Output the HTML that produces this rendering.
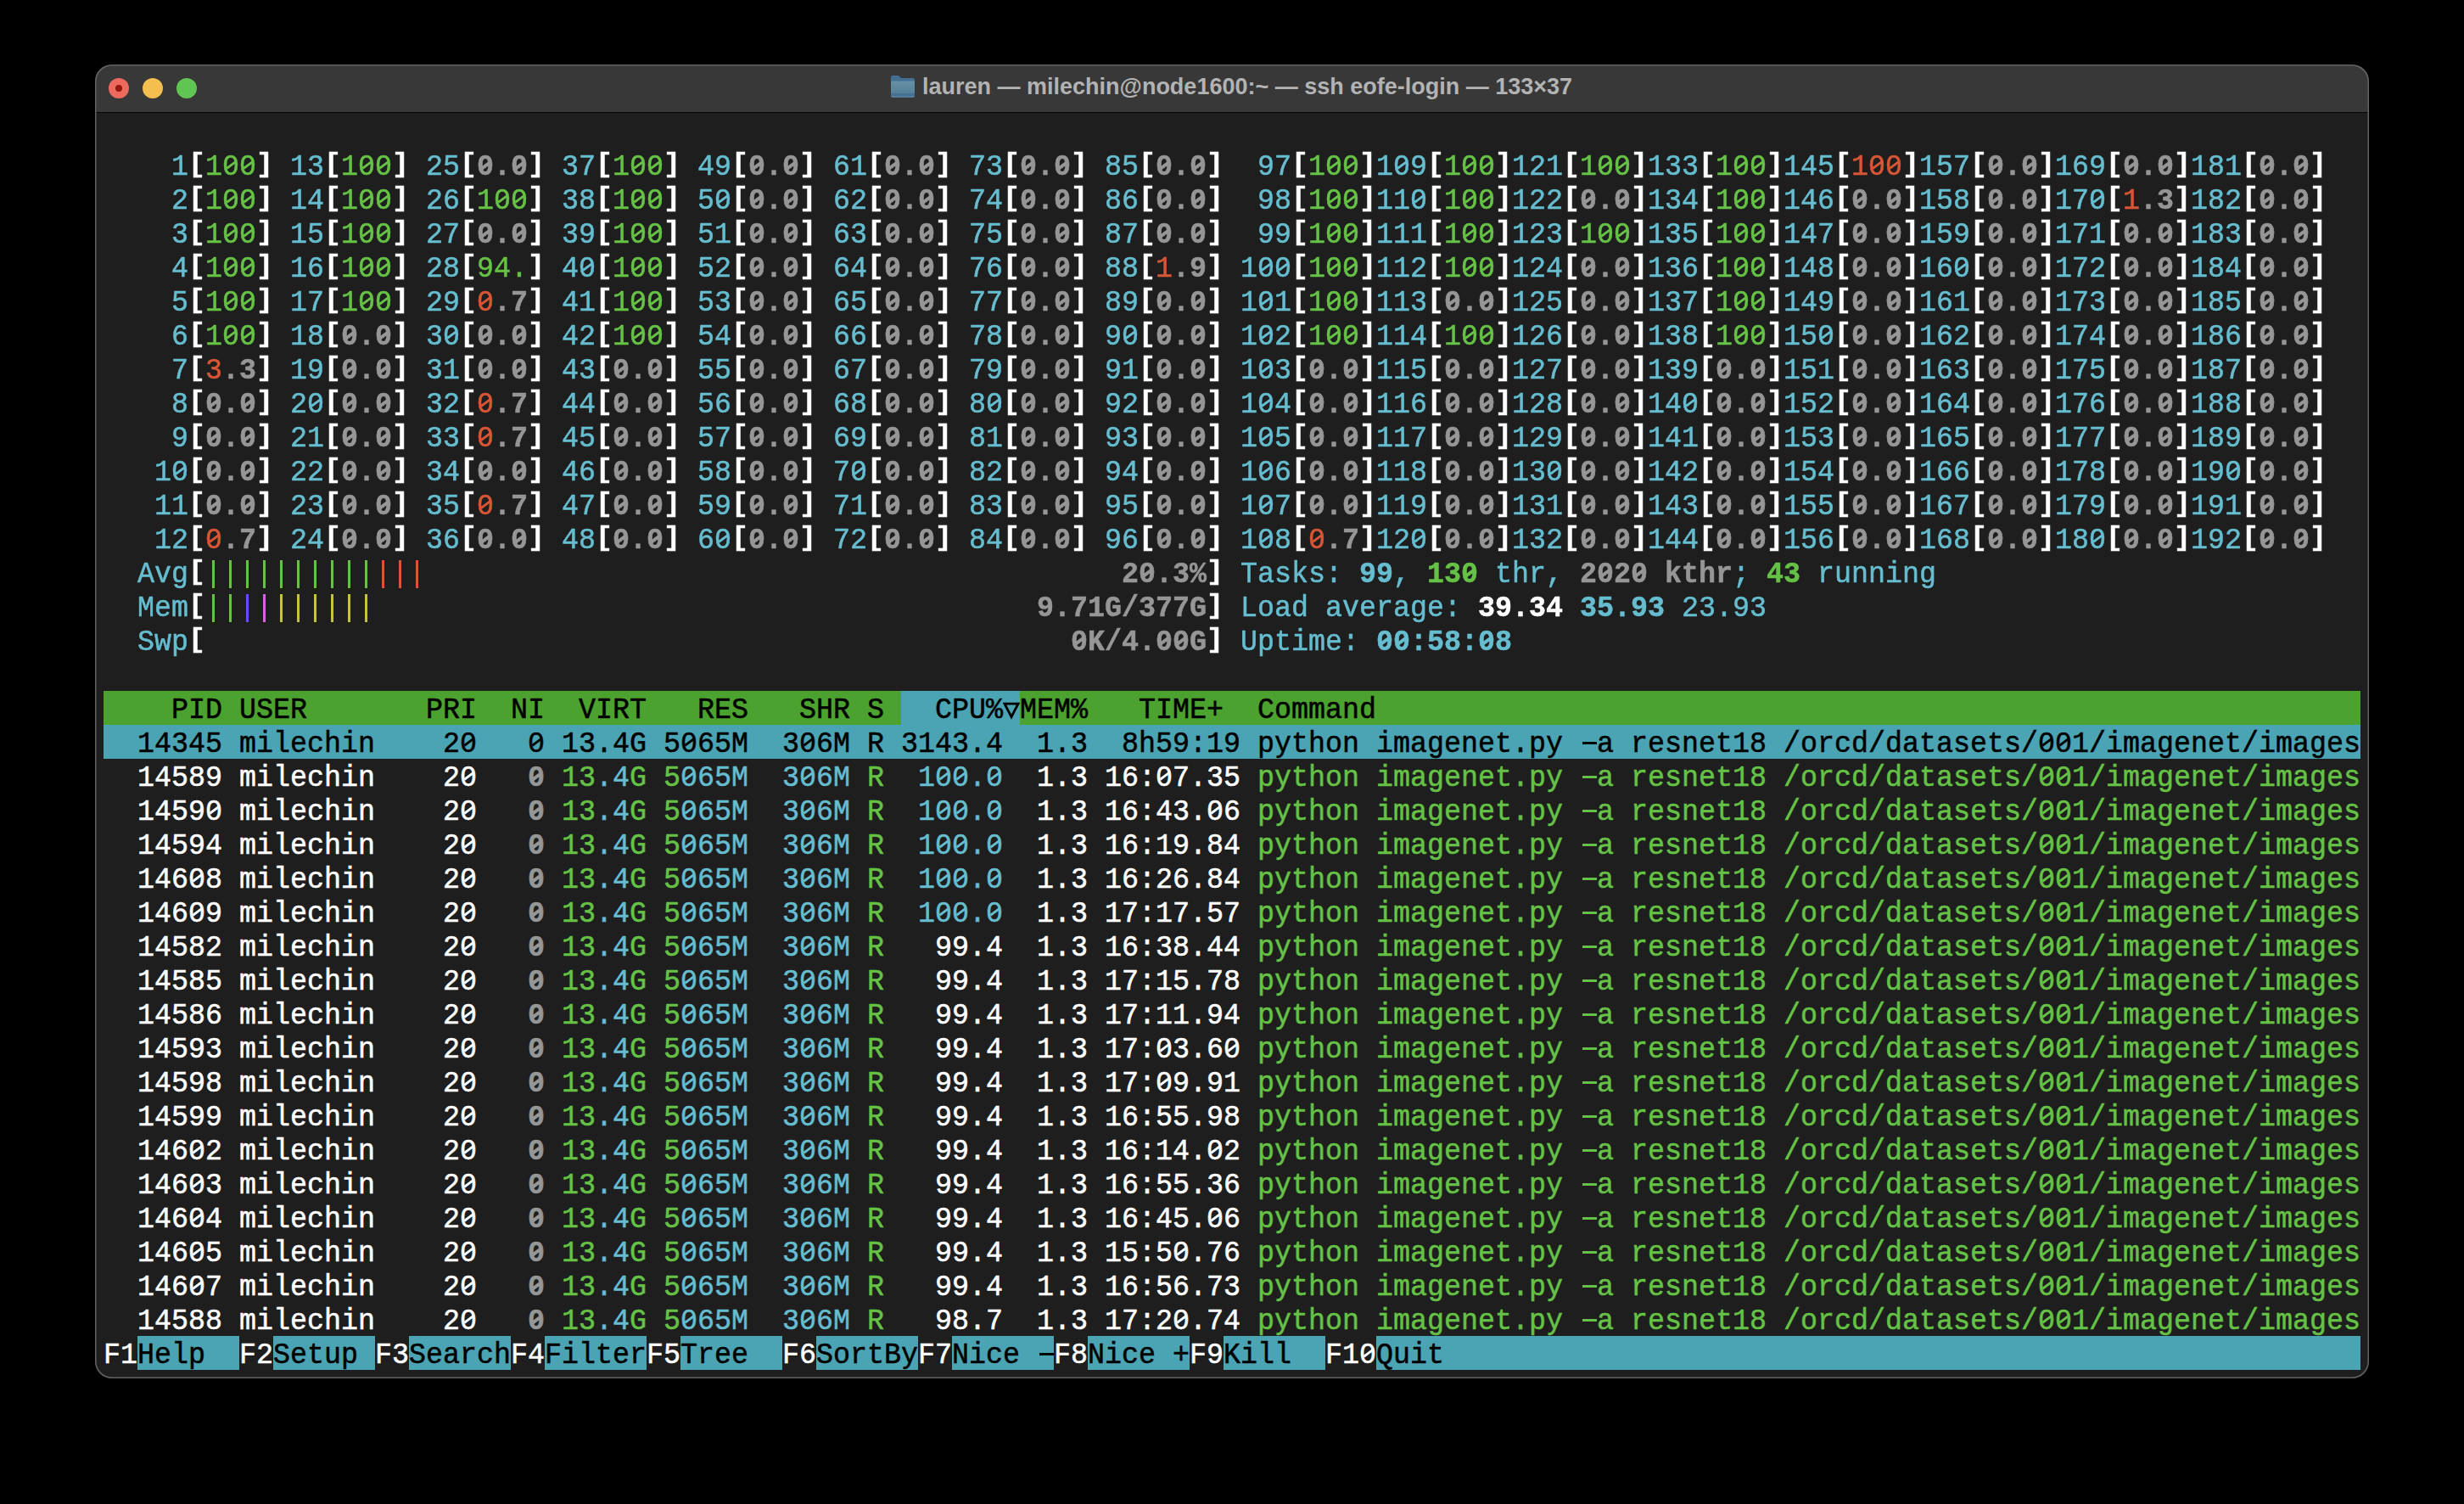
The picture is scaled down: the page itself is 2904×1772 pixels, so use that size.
<!DOCTYPE html><html><head><meta charset="utf-8"><style>
*{margin:0;padding:0;box-sizing:border-box}
html,body{width:2904px;height:1772px;background:#000;overflow:hidden}
.win{position:absolute;left:112px;top:76px;width:2680px;height:1548px;border-radius:20px;
 background:#1e1e1e;overflow:hidden;box-shadow:0 0 0 1.5px #5f5f5f inset}
.tb{position:absolute;left:0;top:0;width:100%;height:56px;background:#383838;border-bottom:1px solid #0d0d0d}
.light{position:absolute;top:16px;width:24px;height:24px;border-radius:50%}
.title{position:absolute;left:977px;top:10px;height:36px;line-height:36px;font:bold 27px "Liberation Sans",sans-serif;color:#b3b3b3;white-space:pre}
.r{position:absolute;left:122px;height:40px;line-height:40px;white-space:pre;font-family:"Liberation Mono",monospace;font-size:33.33px;transform:scaleY(1.06);transform-origin:0 29px;-webkit-text-stroke:0.5px currentColor}
.r span{position:absolute;top:0}
.r span.b{transform:translateY(-1.5px) scaleY(0.88);transform-origin:0 7px}
.bg{position:absolute;height:40px}
.bar{position:absolute;width:3px;height:33px}
.z{position:absolute;width:20px;height:40px}
.z::before{content:"";position:absolute;left:7px;top:16.5px;width:6px;height:7px;background:var(--b)}
.z::after{content:"";position:absolute;left:3.5px;top:19px;width:13px;height:3px;background:var(--c);transform:rotate(-37deg)}
.z.k::after{height:3.6px;top:18.7px}
</style></head><body><div style="position:absolute;left:112px;top:76px;width:2680px;height:1548px;border-radius:20px;background:#1e1e1e;"></div><div style="position:absolute;left:112px;top:76px;width:2680px;height:56px;background:#383838;border-radius:20px 20px 0 0"></div>
<div style="position:absolute;left:112px;top:132px;width:2680px;height:1px;background:#050505"></div>
<div style="position:absolute;left:128px;top:92px;width:24px;height:24px;border-radius:50%;background:#ec6a5e"></div>
<div style="position:absolute;left:168px;top:92px;width:24px;height:24px;border-radius:50%;background:#f4bf4f"></div>
<div style="position:absolute;left:208px;top:92px;width:24px;height:24px;border-radius:50%;background:#61c554"></div>
<div style="position:absolute;left:136px;top:100px;width:8px;height:8px;border-radius:50%;background:#8f1a0e"></div>
<svg style="position:absolute;left:1050px;top:89px" width="28" height="26" viewBox="0 0 28 26"><defs><linearGradient id="fg" x1="0" y1="0" x2="0" y2="1"><stop offset="0" stop-color="#6690a3"/><stop offset="1" stop-color="#4f7a98"/></linearGradient></defs><path d="M0 2Q0 0 2 0H9L12 3H26Q28 3 28 5V24Q28 26 26 26H2Q0 26 0 24Z" fill="#426f92"/><path d="M0 6.5H28V24Q28 26 26 26H2Q0 26 0 24Z" fill="url(#fg)"/><rect x="0" y="21" width="28" height="3" fill="#46708e"/></svg>
<div class="title" style="left:1087px;top:87px;position:absolute">lauren — milechin@node1600:~ — ssh eofe-login — 133×37</div>
<div class="bg" style="left:122px;top:814px;width:2660px;background:#4ba22e"></div>
<div class="bg" style="left:1062px;top:814px;width:140px;background:#4ba4b4"></div>
<div class="bg" style="left:122px;top:854px;width:2660px;background:#4ba4b4"></div>
<div class="bg" style="left:162px;top:1574px;width:120px;background:#4ba4b4"></div>
<div class="bg" style="left:322px;top:1574px;width:120px;background:#4ba4b4"></div>
<div class="bg" style="left:482px;top:1574px;width:120px;background:#4ba4b4"></div>
<div class="bg" style="left:642px;top:1574px;width:120px;background:#4ba4b4"></div>
<div class="bg" style="left:802px;top:1574px;width:120px;background:#4ba4b4"></div>
<div class="bg" style="left:962px;top:1574px;width:120px;background:#4ba4b4"></div>
<div class="bg" style="left:1122px;top:1574px;width:120px;background:#4ba4b4"></div>
<div class="bg" style="left:1282px;top:1574px;width:120px;background:#4ba4b4"></div>
<div class="bg" style="left:1442px;top:1574px;width:120px;background:#4ba4b4"></div>
<div class="bg" style="left:1622px;top:1574px;width:1160px;background:#4ba4b4"></div>
<div class="bar" style="left:250px;top:660px;background:#66c246"></div>
<div class="bar" style="left:270px;top:660px;background:#66c246"></div>
<div class="bar" style="left:290px;top:660px;background:#66c246"></div>
<div class="bar" style="left:310px;top:660px;background:#66c246"></div>
<div class="bar" style="left:330px;top:660px;background:#66c246"></div>
<div class="bar" style="left:350px;top:660px;background:#66c246"></div>
<div class="bar" style="left:370px;top:660px;background:#66c246"></div>
<div class="bar" style="left:390px;top:660px;background:#66c246"></div>
<div class="bar" style="left:410px;top:660px;background:#66c246"></div>
<div class="bar" style="left:430px;top:660px;background:#66c246"></div>
<div class="bar" style="left:450px;top:660px;background:#d75636"></div>
<div class="bar" style="left:470px;top:660px;background:#d75636"></div>
<div class="bar" style="left:490px;top:660px;background:#d75636"></div>
<div class="bar" style="left:250px;top:700px;background:#66c246"></div>
<div class="bar" style="left:270px;top:700px;background:#66c246"></div>
<div class="bar" style="left:290px;top:700px;background:#6a4cff"></div>
<div class="bar" style="left:310px;top:700px;background:#dd5fe6"></div>
<div class="bar" style="left:330px;top:700px;background:#c6c04a"></div>
<div class="bar" style="left:350px;top:700px;background:#c6c04a"></div>
<div class="bar" style="left:370px;top:700px;background:#c6c04a"></div>
<div class="bar" style="left:390px;top:700px;background:#c6c04a"></div>
<div class="bar" style="left:410px;top:700px;background:#c6c04a"></div>
<div class="bar" style="left:430px;top:700px;background:#c6c04a"></div>
<div style="position:absolute;left:1864.5px;top:874px;width:17.5px;height:3.2px;background:#000000"></div>
<div style="position:absolute;left:1864.5px;top:914px;width:17.5px;height:3.2px;background:#66c246"></div>
<div style="position:absolute;left:1864.5px;top:954px;width:17.5px;height:3.2px;background:#66c246"></div>
<div style="position:absolute;left:1864.5px;top:994px;width:17.5px;height:3.2px;background:#66c246"></div>
<div style="position:absolute;left:1864.5px;top:1034px;width:17.5px;height:3.2px;background:#66c246"></div>
<div style="position:absolute;left:1864.5px;top:1074px;width:17.5px;height:3.2px;background:#66c246"></div>
<div style="position:absolute;left:1864.5px;top:1114px;width:17.5px;height:3.2px;background:#66c246"></div>
<div style="position:absolute;left:1864.5px;top:1154px;width:17.5px;height:3.2px;background:#66c246"></div>
<div style="position:absolute;left:1864.5px;top:1194px;width:17.5px;height:3.2px;background:#66c246"></div>
<div style="position:absolute;left:1864.5px;top:1234px;width:17.5px;height:3.2px;background:#66c246"></div>
<div style="position:absolute;left:1864.5px;top:1274px;width:17.5px;height:3.2px;background:#66c246"></div>
<div style="position:absolute;left:1864.5px;top:1314px;width:17.5px;height:3.2px;background:#66c246"></div>
<div style="position:absolute;left:1864.5px;top:1354px;width:17.5px;height:3.2px;background:#66c246"></div>
<div style="position:absolute;left:1864.5px;top:1394px;width:17.5px;height:3.2px;background:#66c246"></div>
<div style="position:absolute;left:1864.5px;top:1434px;width:17.5px;height:3.2px;background:#66c246"></div>
<div style="position:absolute;left:1864.5px;top:1474px;width:17.5px;height:3.2px;background:#66c246"></div>
<div style="position:absolute;left:1864.5px;top:1514px;width:17.5px;height:3.2px;background:#66c246"></div>
<div style="position:absolute;left:1864.5px;top:1554px;width:17.5px;height:3.2px;background:#66c246"></div>
<div style="position:absolute;left:1224.5px;top:1594px;width:17.5px;height:3.2px;background:#000000"></div>
<div class="r" style="top:177px"><span style="left:40px;color:#66bdcf">  1</span><span class="b" style="left:100px;color:#ffffff;font-weight:bold">[</span><span style="left:120px;color:#66c246">100</span><span class="b" style="left:180px;color:#ffffff;font-weight:bold">]</span><span style="left:1340px;color:#66bdcf"> 97</span><span class="b" style="left:1400px;color:#ffffff;font-weight:bold">[</span><span style="left:1420px;color:#66c246">100</span><span class="b" style="left:1480px;color:#ffffff;font-weight:bold">]</span><span style="left:200px;color:#66bdcf"> 13</span><span class="b" style="left:260px;color:#ffffff;font-weight:bold">[</span><span style="left:280px;color:#66c246">100</span><span class="b" style="left:340px;color:#ffffff;font-weight:bold">]</span><span style="left:1500px;color:#66bdcf">109</span><span class="b" style="left:1560px;color:#ffffff;font-weight:bold">[</span><span style="left:1580px;color:#66c246">100</span><span class="b" style="left:1640px;color:#ffffff;font-weight:bold">]</span><span style="left:360px;color:#66bdcf"> 25</span><span class="b" style="left:420px;color:#ffffff;font-weight:bold">[</span><span style="left:440px;color:#969696;font-weight:bold">0.0</span><span class="b" style="left:500px;color:#ffffff;font-weight:bold">]</span><span style="left:1660px;color:#66bdcf">121</span><span class="b" style="left:1720px;color:#ffffff;font-weight:bold">[</span><span style="left:1740px;color:#66c246">100</span><span class="b" style="left:1800px;color:#ffffff;font-weight:bold">]</span><span style="left:520px;color:#66bdcf"> 37</span><span class="b" style="left:580px;color:#ffffff;font-weight:bold">[</span><span style="left:600px;color:#66c246">100</span><span class="b" style="left:660px;color:#ffffff;font-weight:bold">]</span><span style="left:1820px;color:#66bdcf">133</span><span class="b" style="left:1880px;color:#ffffff;font-weight:bold">[</span><span style="left:1900px;color:#66c246">100</span><span class="b" style="left:1960px;color:#ffffff;font-weight:bold">]</span><span style="left:680px;color:#66bdcf"> 49</span><span class="b" style="left:740px;color:#ffffff;font-weight:bold">[</span><span style="left:760px;color:#969696;font-weight:bold">0.0</span><span class="b" style="left:820px;color:#ffffff;font-weight:bold">]</span><span style="left:1980px;color:#66bdcf">145</span><span class="b" style="left:2040px;color:#ffffff;font-weight:bold">[</span><span style="left:2060px;color:#d75636">100</span><span class="b" style="left:2120px;color:#ffffff;font-weight:bold">]</span><span style="left:840px;color:#66bdcf"> 61</span><span class="b" style="left:900px;color:#ffffff;font-weight:bold">[</span><span style="left:920px;color:#969696;font-weight:bold">0.0</span><span class="b" style="left:980px;color:#ffffff;font-weight:bold">]</span><span style="left:2140px;color:#66bdcf">157</span><span class="b" style="left:2200px;color:#ffffff;font-weight:bold">[</span><span style="left:2220px;color:#969696;font-weight:bold">0.0</span><span class="b" style="left:2280px;color:#ffffff;font-weight:bold">]</span><span style="left:1000px;color:#66bdcf"> 73</span><span class="b" style="left:1060px;color:#ffffff;font-weight:bold">[</span><span style="left:1080px;color:#969696;font-weight:bold">0.0</span><span class="b" style="left:1140px;color:#ffffff;font-weight:bold">]</span><span style="left:2300px;color:#66bdcf">169</span><span class="b" style="left:2360px;color:#ffffff;font-weight:bold">[</span><span style="left:2380px;color:#969696;font-weight:bold">0.0</span><span class="b" style="left:2440px;color:#ffffff;font-weight:bold">]</span><span style="left:1160px;color:#66bdcf"> 85</span><span class="b" style="left:1220px;color:#ffffff;font-weight:bold">[</span><span style="left:1240px;color:#969696;font-weight:bold">0.0</span><span class="b" style="left:1300px;color:#ffffff;font-weight:bold">]</span><span style="left:2460px;color:#66bdcf">181</span><span class="b" style="left:2520px;color:#ffffff;font-weight:bold">[</span><span style="left:2540px;color:#969696;font-weight:bold">0.0</span><span class="b" style="left:2600px;color:#ffffff;font-weight:bold">]</span></div>
<div class="r" style="top:217px"><span style="left:40px;color:#66bdcf">  2</span><span class="b" style="left:100px;color:#ffffff;font-weight:bold">[</span><span style="left:120px;color:#66c246">100</span><span class="b" style="left:180px;color:#ffffff;font-weight:bold">]</span><span style="left:1340px;color:#66bdcf"> 98</span><span class="b" style="left:1400px;color:#ffffff;font-weight:bold">[</span><span style="left:1420px;color:#66c246">100</span><span class="b" style="left:1480px;color:#ffffff;font-weight:bold">]</span><span style="left:200px;color:#66bdcf"> 14</span><span class="b" style="left:260px;color:#ffffff;font-weight:bold">[</span><span style="left:280px;color:#66c246">100</span><span class="b" style="left:340px;color:#ffffff;font-weight:bold">]</span><span style="left:1500px;color:#66bdcf">110</span><span class="b" style="left:1560px;color:#ffffff;font-weight:bold">[</span><span style="left:1580px;color:#66c246">100</span><span class="b" style="left:1640px;color:#ffffff;font-weight:bold">]</span><span style="left:360px;color:#66bdcf"> 26</span><span class="b" style="left:420px;color:#ffffff;font-weight:bold">[</span><span style="left:440px;color:#66c246">100</span><span class="b" style="left:500px;color:#ffffff;font-weight:bold">]</span><span style="left:1660px;color:#66bdcf">122</span><span class="b" style="left:1720px;color:#ffffff;font-weight:bold">[</span><span style="left:1740px;color:#969696;font-weight:bold">0.0</span><span class="b" style="left:1800px;color:#ffffff;font-weight:bold">]</span><span style="left:520px;color:#66bdcf"> 38</span><span class="b" style="left:580px;color:#ffffff;font-weight:bold">[</span><span style="left:600px;color:#66c246">100</span><span class="b" style="left:660px;color:#ffffff;font-weight:bold">]</span><span style="left:1820px;color:#66bdcf">134</span><span class="b" style="left:1880px;color:#ffffff;font-weight:bold">[</span><span style="left:1900px;color:#66c246">100</span><span class="b" style="left:1960px;color:#ffffff;font-weight:bold">]</span><span style="left:680px;color:#66bdcf"> 50</span><span class="b" style="left:740px;color:#ffffff;font-weight:bold">[</span><span style="left:760px;color:#969696;font-weight:bold">0.0</span><span class="b" style="left:820px;color:#ffffff;font-weight:bold">]</span><span style="left:1980px;color:#66bdcf">146</span><span class="b" style="left:2040px;color:#ffffff;font-weight:bold">[</span><span style="left:2060px;color:#969696;font-weight:bold">0.0</span><span class="b" style="left:2120px;color:#ffffff;font-weight:bold">]</span><span style="left:840px;color:#66bdcf"> 62</span><span class="b" style="left:900px;color:#ffffff;font-weight:bold">[</span><span style="left:920px;color:#969696;font-weight:bold">0.0</span><span class="b" style="left:980px;color:#ffffff;font-weight:bold">]</span><span style="left:2140px;color:#66bdcf">158</span><span class="b" style="left:2200px;color:#ffffff;font-weight:bold">[</span><span style="left:2220px;color:#969696;font-weight:bold">0.0</span><span class="b" style="left:2280px;color:#ffffff;font-weight:bold">]</span><span style="left:1000px;color:#66bdcf"> 74</span><span class="b" style="left:1060px;color:#ffffff;font-weight:bold">[</span><span style="left:1080px;color:#969696;font-weight:bold">0.0</span><span class="b" style="left:1140px;color:#ffffff;font-weight:bold">]</span><span style="left:2300px;color:#66bdcf">170</span><span class="b" style="left:2360px;color:#ffffff;font-weight:bold">[</span><span style="left:2380px;color:#d75636">1</span><span style="left:2400px;color:#969696;font-weight:bold">.3</span><span class="b" style="left:2440px;color:#ffffff;font-weight:bold">]</span><span style="left:1160px;color:#66bdcf"> 86</span><span class="b" style="left:1220px;color:#ffffff;font-weight:bold">[</span><span style="left:1240px;color:#969696;font-weight:bold">0.0</span><span class="b" style="left:1300px;color:#ffffff;font-weight:bold">]</span><span style="left:2460px;color:#66bdcf">182</span><span class="b" style="left:2520px;color:#ffffff;font-weight:bold">[</span><span style="left:2540px;color:#969696;font-weight:bold">0.0</span><span class="b" style="left:2600px;color:#ffffff;font-weight:bold">]</span></div>
<div class="r" style="top:257px"><span style="left:40px;color:#66bdcf">  3</span><span class="b" style="left:100px;color:#ffffff;font-weight:bold">[</span><span style="left:120px;color:#66c246">100</span><span class="b" style="left:180px;color:#ffffff;font-weight:bold">]</span><span style="left:1340px;color:#66bdcf"> 99</span><span class="b" style="left:1400px;color:#ffffff;font-weight:bold">[</span><span style="left:1420px;color:#66c246">100</span><span class="b" style="left:1480px;color:#ffffff;font-weight:bold">]</span><span style="left:200px;color:#66bdcf"> 15</span><span class="b" style="left:260px;color:#ffffff;font-weight:bold">[</span><span style="left:280px;color:#66c246">100</span><span class="b" style="left:340px;color:#ffffff;font-weight:bold">]</span><span style="left:1500px;color:#66bdcf">111</span><span class="b" style="left:1560px;color:#ffffff;font-weight:bold">[</span><span style="left:1580px;color:#66c246">100</span><span class="b" style="left:1640px;color:#ffffff;font-weight:bold">]</span><span style="left:360px;color:#66bdcf"> 27</span><span class="b" style="left:420px;color:#ffffff;font-weight:bold">[</span><span style="left:440px;color:#969696;font-weight:bold">0.0</span><span class="b" style="left:500px;color:#ffffff;font-weight:bold">]</span><span style="left:1660px;color:#66bdcf">123</span><span class="b" style="left:1720px;color:#ffffff;font-weight:bold">[</span><span style="left:1740px;color:#66c246">100</span><span class="b" style="left:1800px;color:#ffffff;font-weight:bold">]</span><span style="left:520px;color:#66bdcf"> 39</span><span class="b" style="left:580px;color:#ffffff;font-weight:bold">[</span><span style="left:600px;color:#66c246">100</span><span class="b" style="left:660px;color:#ffffff;font-weight:bold">]</span><span style="left:1820px;color:#66bdcf">135</span><span class="b" style="left:1880px;color:#ffffff;font-weight:bold">[</span><span style="left:1900px;color:#66c246">100</span><span class="b" style="left:1960px;color:#ffffff;font-weight:bold">]</span><span style="left:680px;color:#66bdcf"> 51</span><span class="b" style="left:740px;color:#ffffff;font-weight:bold">[</span><span style="left:760px;color:#969696;font-weight:bold">0.0</span><span class="b" style="left:820px;color:#ffffff;font-weight:bold">]</span><span style="left:1980px;color:#66bdcf">147</span><span class="b" style="left:2040px;color:#ffffff;font-weight:bold">[</span><span style="left:2060px;color:#969696;font-weight:bold">0.0</span><span class="b" style="left:2120px;color:#ffffff;font-weight:bold">]</span><span style="left:840px;color:#66bdcf"> 63</span><span class="b" style="left:900px;color:#ffffff;font-weight:bold">[</span><span style="left:920px;color:#969696;font-weight:bold">0.0</span><span class="b" style="left:980px;color:#ffffff;font-weight:bold">]</span><span style="left:2140px;color:#66bdcf">159</span><span class="b" style="left:2200px;color:#ffffff;font-weight:bold">[</span><span style="left:2220px;color:#969696;font-weight:bold">0.0</span><span class="b" style="left:2280px;color:#ffffff;font-weight:bold">]</span><span style="left:1000px;color:#66bdcf"> 75</span><span class="b" style="left:1060px;color:#ffffff;font-weight:bold">[</span><span style="left:1080px;color:#969696;font-weight:bold">0.0</span><span class="b" style="left:1140px;color:#ffffff;font-weight:bold">]</span><span style="left:2300px;color:#66bdcf">171</span><span class="b" style="left:2360px;color:#ffffff;font-weight:bold">[</span><span style="left:2380px;color:#969696;font-weight:bold">0.0</span><span class="b" style="left:2440px;color:#ffffff;font-weight:bold">]</span><span style="left:1160px;color:#66bdcf"> 87</span><span class="b" style="left:1220px;color:#ffffff;font-weight:bold">[</span><span style="left:1240px;color:#969696;font-weight:bold">0.0</span><span class="b" style="left:1300px;color:#ffffff;font-weight:bold">]</span><span style="left:2460px;color:#66bdcf">183</span><span class="b" style="left:2520px;color:#ffffff;font-weight:bold">[</span><span style="left:2540px;color:#969696;font-weight:bold">0.0</span><span class="b" style="left:2600px;color:#ffffff;font-weight:bold">]</span></div>
<div class="r" style="top:297px"><span style="left:40px;color:#66bdcf">  4</span><span class="b" style="left:100px;color:#ffffff;font-weight:bold">[</span><span style="left:120px;color:#66c246">100</span><span class="b" style="left:180px;color:#ffffff;font-weight:bold">]</span><span style="left:1340px;color:#66bdcf">100</span><span class="b" style="left:1400px;color:#ffffff;font-weight:bold">[</span><span style="left:1420px;color:#66c246">100</span><span class="b" style="left:1480px;color:#ffffff;font-weight:bold">]</span><span style="left:200px;color:#66bdcf"> 16</span><span class="b" style="left:260px;color:#ffffff;font-weight:bold">[</span><span style="left:280px;color:#66c246">100</span><span class="b" style="left:340px;color:#ffffff;font-weight:bold">]</span><span style="left:1500px;color:#66bdcf">112</span><span class="b" style="left:1560px;color:#ffffff;font-weight:bold">[</span><span style="left:1580px;color:#66c246">100</span><span class="b" style="left:1640px;color:#ffffff;font-weight:bold">]</span><span style="left:360px;color:#66bdcf"> 28</span><span class="b" style="left:420px;color:#ffffff;font-weight:bold">[</span><span style="left:440px;color:#66c246">94.</span><span class="b" style="left:500px;color:#ffffff;font-weight:bold">]</span><span style="left:1660px;color:#66bdcf">124</span><span class="b" style="left:1720px;color:#ffffff;font-weight:bold">[</span><span style="left:1740px;color:#969696;font-weight:bold">0.0</span><span class="b" style="left:1800px;color:#ffffff;font-weight:bold">]</span><span style="left:520px;color:#66bdcf"> 40</span><span class="b" style="left:580px;color:#ffffff;font-weight:bold">[</span><span style="left:600px;color:#66c246">100</span><span class="b" style="left:660px;color:#ffffff;font-weight:bold">]</span><span style="left:1820px;color:#66bdcf">136</span><span class="b" style="left:1880px;color:#ffffff;font-weight:bold">[</span><span style="left:1900px;color:#66c246">100</span><span class="b" style="left:1960px;color:#ffffff;font-weight:bold">]</span><span style="left:680px;color:#66bdcf"> 52</span><span class="b" style="left:740px;color:#ffffff;font-weight:bold">[</span><span style="left:760px;color:#969696;font-weight:bold">0.0</span><span class="b" style="left:820px;color:#ffffff;font-weight:bold">]</span><span style="left:1980px;color:#66bdcf">148</span><span class="b" style="left:2040px;color:#ffffff;font-weight:bold">[</span><span style="left:2060px;color:#969696;font-weight:bold">0.0</span><span class="b" style="left:2120px;color:#ffffff;font-weight:bold">]</span><span style="left:840px;color:#66bdcf"> 64</span><span class="b" style="left:900px;color:#ffffff;font-weight:bold">[</span><span style="left:920px;color:#969696;font-weight:bold">0.0</span><span class="b" style="left:980px;color:#ffffff;font-weight:bold">]</span><span style="left:2140px;color:#66bdcf">160</span><span class="b" style="left:2200px;color:#ffffff;font-weight:bold">[</span><span style="left:2220px;color:#969696;font-weight:bold">0.0</span><span class="b" style="left:2280px;color:#ffffff;font-weight:bold">]</span><span style="left:1000px;color:#66bdcf"> 76</span><span class="b" style="left:1060px;color:#ffffff;font-weight:bold">[</span><span style="left:1080px;color:#969696;font-weight:bold">0.0</span><span class="b" style="left:1140px;color:#ffffff;font-weight:bold">]</span><span style="left:2300px;color:#66bdcf">172</span><span class="b" style="left:2360px;color:#ffffff;font-weight:bold">[</span><span style="left:2380px;color:#969696;font-weight:bold">0.0</span><span class="b" style="left:2440px;color:#ffffff;font-weight:bold">]</span><span style="left:1160px;color:#66bdcf"> 88</span><span class="b" style="left:1220px;color:#ffffff;font-weight:bold">[</span><span style="left:1240px;color:#d75636">1</span><span style="left:1260px;color:#969696;font-weight:bold">.9</span><span class="b" style="left:1300px;color:#ffffff;font-weight:bold">]</span><span style="left:2460px;color:#66bdcf">184</span><span class="b" style="left:2520px;color:#ffffff;font-weight:bold">[</span><span style="left:2540px;color:#969696;font-weight:bold">0.0</span><span class="b" style="left:2600px;color:#ffffff;font-weight:bold">]</span></div>
<div class="r" style="top:337px"><span style="left:40px;color:#66bdcf">  5</span><span class="b" style="left:100px;color:#ffffff;font-weight:bold">[</span><span style="left:120px;color:#66c246">100</span><span class="b" style="left:180px;color:#ffffff;font-weight:bold">]</span><span style="left:1340px;color:#66bdcf">101</span><span class="b" style="left:1400px;color:#ffffff;font-weight:bold">[</span><span style="left:1420px;color:#66c246">100</span><span class="b" style="left:1480px;color:#ffffff;font-weight:bold">]</span><span style="left:200px;color:#66bdcf"> 17</span><span class="b" style="left:260px;color:#ffffff;font-weight:bold">[</span><span style="left:280px;color:#66c246">100</span><span class="b" style="left:340px;color:#ffffff;font-weight:bold">]</span><span style="left:1500px;color:#66bdcf">113</span><span class="b" style="left:1560px;color:#ffffff;font-weight:bold">[</span><span style="left:1580px;color:#969696;font-weight:bold">0.0</span><span class="b" style="left:1640px;color:#ffffff;font-weight:bold">]</span><span style="left:360px;color:#66bdcf"> 29</span><span class="b" style="left:420px;color:#ffffff;font-weight:bold">[</span><span style="left:440px;color:#d75636">0</span><span style="left:460px;color:#969696;font-weight:bold">.7</span><span class="b" style="left:500px;color:#ffffff;font-weight:bold">]</span><span style="left:1660px;color:#66bdcf">125</span><span class="b" style="left:1720px;color:#ffffff;font-weight:bold">[</span><span style="left:1740px;color:#969696;font-weight:bold">0.0</span><span class="b" style="left:1800px;color:#ffffff;font-weight:bold">]</span><span style="left:520px;color:#66bdcf"> 41</span><span class="b" style="left:580px;color:#ffffff;font-weight:bold">[</span><span style="left:600px;color:#66c246">100</span><span class="b" style="left:660px;color:#ffffff;font-weight:bold">]</span><span style="left:1820px;color:#66bdcf">137</span><span class="b" style="left:1880px;color:#ffffff;font-weight:bold">[</span><span style="left:1900px;color:#66c246">100</span><span class="b" style="left:1960px;color:#ffffff;font-weight:bold">]</span><span style="left:680px;color:#66bdcf"> 53</span><span class="b" style="left:740px;color:#ffffff;font-weight:bold">[</span><span style="left:760px;color:#969696;font-weight:bold">0.0</span><span class="b" style="left:820px;color:#ffffff;font-weight:bold">]</span><span style="left:1980px;color:#66bdcf">149</span><span class="b" style="left:2040px;color:#ffffff;font-weight:bold">[</span><span style="left:2060px;color:#969696;font-weight:bold">0.0</span><span class="b" style="left:2120px;color:#ffffff;font-weight:bold">]</span><span style="left:840px;color:#66bdcf"> 65</span><span class="b" style="left:900px;color:#ffffff;font-weight:bold">[</span><span style="left:920px;color:#969696;font-weight:bold">0.0</span><span class="b" style="left:980px;color:#ffffff;font-weight:bold">]</span><span style="left:2140px;color:#66bdcf">161</span><span class="b" style="left:2200px;color:#ffffff;font-weight:bold">[</span><span style="left:2220px;color:#969696;font-weight:bold">0.0</span><span class="b" style="left:2280px;color:#ffffff;font-weight:bold">]</span><span style="left:1000px;color:#66bdcf"> 77</span><span class="b" style="left:1060px;color:#ffffff;font-weight:bold">[</span><span style="left:1080px;color:#969696;font-weight:bold">0.0</span><span class="b" style="left:1140px;color:#ffffff;font-weight:bold">]</span><span style="left:2300px;color:#66bdcf">173</span><span class="b" style="left:2360px;color:#ffffff;font-weight:bold">[</span><span style="left:2380px;color:#969696;font-weight:bold">0.0</span><span class="b" style="left:2440px;color:#ffffff;font-weight:bold">]</span><span style="left:1160px;color:#66bdcf"> 89</span><span class="b" style="left:1220px;color:#ffffff;font-weight:bold">[</span><span style="left:1240px;color:#969696;font-weight:bold">0.0</span><span class="b" style="left:1300px;color:#ffffff;font-weight:bold">]</span><span style="left:2460px;color:#66bdcf">185</span><span class="b" style="left:2520px;color:#ffffff;font-weight:bold">[</span><span style="left:2540px;color:#969696;font-weight:bold">0.0</span><span class="b" style="left:2600px;color:#ffffff;font-weight:bold">]</span></div>
<div class="r" style="top:377px"><span style="left:40px;color:#66bdcf">  6</span><span class="b" style="left:100px;color:#ffffff;font-weight:bold">[</span><span style="left:120px;color:#66c246">100</span><span class="b" style="left:180px;color:#ffffff;font-weight:bold">]</span><span style="left:1340px;color:#66bdcf">102</span><span class="b" style="left:1400px;color:#ffffff;font-weight:bold">[</span><span style="left:1420px;color:#66c246">100</span><span class="b" style="left:1480px;color:#ffffff;font-weight:bold">]</span><span style="left:200px;color:#66bdcf"> 18</span><span class="b" style="left:260px;color:#ffffff;font-weight:bold">[</span><span style="left:280px;color:#969696;font-weight:bold">0.0</span><span class="b" style="left:340px;color:#ffffff;font-weight:bold">]</span><span style="left:1500px;color:#66bdcf">114</span><span class="b" style="left:1560px;color:#ffffff;font-weight:bold">[</span><span style="left:1580px;color:#66c246">100</span><span class="b" style="left:1640px;color:#ffffff;font-weight:bold">]</span><span style="left:360px;color:#66bdcf"> 30</span><span class="b" style="left:420px;color:#ffffff;font-weight:bold">[</span><span style="left:440px;color:#969696;font-weight:bold">0.0</span><span class="b" style="left:500px;color:#ffffff;font-weight:bold">]</span><span style="left:1660px;color:#66bdcf">126</span><span class="b" style="left:1720px;color:#ffffff;font-weight:bold">[</span><span style="left:1740px;color:#969696;font-weight:bold">0.0</span><span class="b" style="left:1800px;color:#ffffff;font-weight:bold">]</span><span style="left:520px;color:#66bdcf"> 42</span><span class="b" style="left:580px;color:#ffffff;font-weight:bold">[</span><span style="left:600px;color:#66c246">100</span><span class="b" style="left:660px;color:#ffffff;font-weight:bold">]</span><span style="left:1820px;color:#66bdcf">138</span><span class="b" style="left:1880px;color:#ffffff;font-weight:bold">[</span><span style="left:1900px;color:#66c246">100</span><span class="b" style="left:1960px;color:#ffffff;font-weight:bold">]</span><span style="left:680px;color:#66bdcf"> 54</span><span class="b" style="left:740px;color:#ffffff;font-weight:bold">[</span><span style="left:760px;color:#969696;font-weight:bold">0.0</span><span class="b" style="left:820px;color:#ffffff;font-weight:bold">]</span><span style="left:1980px;color:#66bdcf">150</span><span class="b" style="left:2040px;color:#ffffff;font-weight:bold">[</span><span style="left:2060px;color:#969696;font-weight:bold">0.0</span><span class="b" style="left:2120px;color:#ffffff;font-weight:bold">]</span><span style="left:840px;color:#66bdcf"> 66</span><span class="b" style="left:900px;color:#ffffff;font-weight:bold">[</span><span style="left:920px;color:#969696;font-weight:bold">0.0</span><span class="b" style="left:980px;color:#ffffff;font-weight:bold">]</span><span style="left:2140px;color:#66bdcf">162</span><span class="b" style="left:2200px;color:#ffffff;font-weight:bold">[</span><span style="left:2220px;color:#969696;font-weight:bold">0.0</span><span class="b" style="left:2280px;color:#ffffff;font-weight:bold">]</span><span style="left:1000px;color:#66bdcf"> 78</span><span class="b" style="left:1060px;color:#ffffff;font-weight:bold">[</span><span style="left:1080px;color:#969696;font-weight:bold">0.0</span><span class="b" style="left:1140px;color:#ffffff;font-weight:bold">]</span><span style="left:2300px;color:#66bdcf">174</span><span class="b" style="left:2360px;color:#ffffff;font-weight:bold">[</span><span style="left:2380px;color:#969696;font-weight:bold">0.0</span><span class="b" style="left:2440px;color:#ffffff;font-weight:bold">]</span><span style="left:1160px;color:#66bdcf"> 90</span><span class="b" style="left:1220px;color:#ffffff;font-weight:bold">[</span><span style="left:1240px;color:#969696;font-weight:bold">0.0</span><span class="b" style="left:1300px;color:#ffffff;font-weight:bold">]</span><span style="left:2460px;color:#66bdcf">186</span><span class="b" style="left:2520px;color:#ffffff;font-weight:bold">[</span><span style="left:2540px;color:#969696;font-weight:bold">0.0</span><span class="b" style="left:2600px;color:#ffffff;font-weight:bold">]</span></div>
<div class="r" style="top:417px"><span style="left:40px;color:#66bdcf">  7</span><span class="b" style="left:100px;color:#ffffff;font-weight:bold">[</span><span style="left:120px;color:#d75636">3</span><span style="left:140px;color:#969696;font-weight:bold">.3</span><span class="b" style="left:180px;color:#ffffff;font-weight:bold">]</span><span style="left:1340px;color:#66bdcf">103</span><span class="b" style="left:1400px;color:#ffffff;font-weight:bold">[</span><span style="left:1420px;color:#969696;font-weight:bold">0.0</span><span class="b" style="left:1480px;color:#ffffff;font-weight:bold">]</span><span style="left:200px;color:#66bdcf"> 19</span><span class="b" style="left:260px;color:#ffffff;font-weight:bold">[</span><span style="left:280px;color:#969696;font-weight:bold">0.0</span><span class="b" style="left:340px;color:#ffffff;font-weight:bold">]</span><span style="left:1500px;color:#66bdcf">115</span><span class="b" style="left:1560px;color:#ffffff;font-weight:bold">[</span><span style="left:1580px;color:#969696;font-weight:bold">0.0</span><span class="b" style="left:1640px;color:#ffffff;font-weight:bold">]</span><span style="left:360px;color:#66bdcf"> 31</span><span class="b" style="left:420px;color:#ffffff;font-weight:bold">[</span><span style="left:440px;color:#969696;font-weight:bold">0.0</span><span class="b" style="left:500px;color:#ffffff;font-weight:bold">]</span><span style="left:1660px;color:#66bdcf">127</span><span class="b" style="left:1720px;color:#ffffff;font-weight:bold">[</span><span style="left:1740px;color:#969696;font-weight:bold">0.0</span><span class="b" style="left:1800px;color:#ffffff;font-weight:bold">]</span><span style="left:520px;color:#66bdcf"> 43</span><span class="b" style="left:580px;color:#ffffff;font-weight:bold">[</span><span style="left:600px;color:#969696;font-weight:bold">0.0</span><span class="b" style="left:660px;color:#ffffff;font-weight:bold">]</span><span style="left:1820px;color:#66bdcf">139</span><span class="b" style="left:1880px;color:#ffffff;font-weight:bold">[</span><span style="left:1900px;color:#969696;font-weight:bold">0.0</span><span class="b" style="left:1960px;color:#ffffff;font-weight:bold">]</span><span style="left:680px;color:#66bdcf"> 55</span><span class="b" style="left:740px;color:#ffffff;font-weight:bold">[</span><span style="left:760px;color:#969696;font-weight:bold">0.0</span><span class="b" style="left:820px;color:#ffffff;font-weight:bold">]</span><span style="left:1980px;color:#66bdcf">151</span><span class="b" style="left:2040px;color:#ffffff;font-weight:bold">[</span><span style="left:2060px;color:#969696;font-weight:bold">0.0</span><span class="b" style="left:2120px;color:#ffffff;font-weight:bold">]</span><span style="left:840px;color:#66bdcf"> 67</span><span class="b" style="left:900px;color:#ffffff;font-weight:bold">[</span><span style="left:920px;color:#969696;font-weight:bold">0.0</span><span class="b" style="left:980px;color:#ffffff;font-weight:bold">]</span><span style="left:2140px;color:#66bdcf">163</span><span class="b" style="left:2200px;color:#ffffff;font-weight:bold">[</span><span style="left:2220px;color:#969696;font-weight:bold">0.0</span><span class="b" style="left:2280px;color:#ffffff;font-weight:bold">]</span><span style="left:1000px;color:#66bdcf"> 79</span><span class="b" style="left:1060px;color:#ffffff;font-weight:bold">[</span><span style="left:1080px;color:#969696;font-weight:bold">0.0</span><span class="b" style="left:1140px;color:#ffffff;font-weight:bold">]</span><span style="left:2300px;color:#66bdcf">175</span><span class="b" style="left:2360px;color:#ffffff;font-weight:bold">[</span><span style="left:2380px;color:#969696;font-weight:bold">0.0</span><span class="b" style="left:2440px;color:#ffffff;font-weight:bold">]</span><span style="left:1160px;color:#66bdcf"> 91</span><span class="b" style="left:1220px;color:#ffffff;font-weight:bold">[</span><span style="left:1240px;color:#969696;font-weight:bold">0.0</span><span class="b" style="left:1300px;color:#ffffff;font-weight:bold">]</span><span style="left:2460px;color:#66bdcf">187</span><span class="b" style="left:2520px;color:#ffffff;font-weight:bold">[</span><span style="left:2540px;color:#969696;font-weight:bold">0.0</span><span class="b" style="left:2600px;color:#ffffff;font-weight:bold">]</span></div>
<div class="r" style="top:457px"><span style="left:40px;color:#66bdcf">  8</span><span class="b" style="left:100px;color:#ffffff;font-weight:bold">[</span><span style="left:120px;color:#969696;font-weight:bold">0.0</span><span class="b" style="left:180px;color:#ffffff;font-weight:bold">]</span><span style="left:1340px;color:#66bdcf">104</span><span class="b" style="left:1400px;color:#ffffff;font-weight:bold">[</span><span style="left:1420px;color:#969696;font-weight:bold">0.0</span><span class="b" style="left:1480px;color:#ffffff;font-weight:bold">]</span><span style="left:200px;color:#66bdcf"> 20</span><span class="b" style="left:260px;color:#ffffff;font-weight:bold">[</span><span style="left:280px;color:#969696;font-weight:bold">0.0</span><span class="b" style="left:340px;color:#ffffff;font-weight:bold">]</span><span style="left:1500px;color:#66bdcf">116</span><span class="b" style="left:1560px;color:#ffffff;font-weight:bold">[</span><span style="left:1580px;color:#969696;font-weight:bold">0.0</span><span class="b" style="left:1640px;color:#ffffff;font-weight:bold">]</span><span style="left:360px;color:#66bdcf"> 32</span><span class="b" style="left:420px;color:#ffffff;font-weight:bold">[</span><span style="left:440px;color:#d75636">0</span><span style="left:460px;color:#969696;font-weight:bold">.7</span><span class="b" style="left:500px;color:#ffffff;font-weight:bold">]</span><span style="left:1660px;color:#66bdcf">128</span><span class="b" style="left:1720px;color:#ffffff;font-weight:bold">[</span><span style="left:1740px;color:#969696;font-weight:bold">0.0</span><span class="b" style="left:1800px;color:#ffffff;font-weight:bold">]</span><span style="left:520px;color:#66bdcf"> 44</span><span class="b" style="left:580px;color:#ffffff;font-weight:bold">[</span><span style="left:600px;color:#969696;font-weight:bold">0.0</span><span class="b" style="left:660px;color:#ffffff;font-weight:bold">]</span><span style="left:1820px;color:#66bdcf">140</span><span class="b" style="left:1880px;color:#ffffff;font-weight:bold">[</span><span style="left:1900px;color:#969696;font-weight:bold">0.0</span><span class="b" style="left:1960px;color:#ffffff;font-weight:bold">]</span><span style="left:680px;color:#66bdcf"> 56</span><span class="b" style="left:740px;color:#ffffff;font-weight:bold">[</span><span style="left:760px;color:#969696;font-weight:bold">0.0</span><span class="b" style="left:820px;color:#ffffff;font-weight:bold">]</span><span style="left:1980px;color:#66bdcf">152</span><span class="b" style="left:2040px;color:#ffffff;font-weight:bold">[</span><span style="left:2060px;color:#969696;font-weight:bold">0.0</span><span class="b" style="left:2120px;color:#ffffff;font-weight:bold">]</span><span style="left:840px;color:#66bdcf"> 68</span><span class="b" style="left:900px;color:#ffffff;font-weight:bold">[</span><span style="left:920px;color:#969696;font-weight:bold">0.0</span><span class="b" style="left:980px;color:#ffffff;font-weight:bold">]</span><span style="left:2140px;color:#66bdcf">164</span><span class="b" style="left:2200px;color:#ffffff;font-weight:bold">[</span><span style="left:2220px;color:#969696;font-weight:bold">0.0</span><span class="b" style="left:2280px;color:#ffffff;font-weight:bold">]</span><span style="left:1000px;color:#66bdcf"> 80</span><span class="b" style="left:1060px;color:#ffffff;font-weight:bold">[</span><span style="left:1080px;color:#969696;font-weight:bold">0.0</span><span class="b" style="left:1140px;color:#ffffff;font-weight:bold">]</span><span style="left:2300px;color:#66bdcf">176</span><span class="b" style="left:2360px;color:#ffffff;font-weight:bold">[</span><span style="left:2380px;color:#969696;font-weight:bold">0.0</span><span class="b" style="left:2440px;color:#ffffff;font-weight:bold">]</span><span style="left:1160px;color:#66bdcf"> 92</span><span class="b" style="left:1220px;color:#ffffff;font-weight:bold">[</span><span style="left:1240px;color:#969696;font-weight:bold">0.0</span><span class="b" style="left:1300px;color:#ffffff;font-weight:bold">]</span><span style="left:2460px;color:#66bdcf">188</span><span class="b" style="left:2520px;color:#ffffff;font-weight:bold">[</span><span style="left:2540px;color:#969696;font-weight:bold">0.0</span><span class="b" style="left:2600px;color:#ffffff;font-weight:bold">]</span></div>
<div class="r" style="top:497px"><span style="left:40px;color:#66bdcf">  9</span><span class="b" style="left:100px;color:#ffffff;font-weight:bold">[</span><span style="left:120px;color:#969696;font-weight:bold">0.0</span><span class="b" style="left:180px;color:#ffffff;font-weight:bold">]</span><span style="left:1340px;color:#66bdcf">105</span><span class="b" style="left:1400px;color:#ffffff;font-weight:bold">[</span><span style="left:1420px;color:#969696;font-weight:bold">0.0</span><span class="b" style="left:1480px;color:#ffffff;font-weight:bold">]</span><span style="left:200px;color:#66bdcf"> 21</span><span class="b" style="left:260px;color:#ffffff;font-weight:bold">[</span><span style="left:280px;color:#969696;font-weight:bold">0.0</span><span class="b" style="left:340px;color:#ffffff;font-weight:bold">]</span><span style="left:1500px;color:#66bdcf">117</span><span class="b" style="left:1560px;color:#ffffff;font-weight:bold">[</span><span style="left:1580px;color:#969696;font-weight:bold">0.0</span><span class="b" style="left:1640px;color:#ffffff;font-weight:bold">]</span><span style="left:360px;color:#66bdcf"> 33</span><span class="b" style="left:420px;color:#ffffff;font-weight:bold">[</span><span style="left:440px;color:#d75636">0</span><span style="left:460px;color:#969696;font-weight:bold">.7</span><span class="b" style="left:500px;color:#ffffff;font-weight:bold">]</span><span style="left:1660px;color:#66bdcf">129</span><span class="b" style="left:1720px;color:#ffffff;font-weight:bold">[</span><span style="left:1740px;color:#969696;font-weight:bold">0.0</span><span class="b" style="left:1800px;color:#ffffff;font-weight:bold">]</span><span style="left:520px;color:#66bdcf"> 45</span><span class="b" style="left:580px;color:#ffffff;font-weight:bold">[</span><span style="left:600px;color:#969696;font-weight:bold">0.0</span><span class="b" style="left:660px;color:#ffffff;font-weight:bold">]</span><span style="left:1820px;color:#66bdcf">141</span><span class="b" style="left:1880px;color:#ffffff;font-weight:bold">[</span><span style="left:1900px;color:#969696;font-weight:bold">0.0</span><span class="b" style="left:1960px;color:#ffffff;font-weight:bold">]</span><span style="left:680px;color:#66bdcf"> 57</span><span class="b" style="left:740px;color:#ffffff;font-weight:bold">[</span><span style="left:760px;color:#969696;font-weight:bold">0.0</span><span class="b" style="left:820px;color:#ffffff;font-weight:bold">]</span><span style="left:1980px;color:#66bdcf">153</span><span class="b" style="left:2040px;color:#ffffff;font-weight:bold">[</span><span style="left:2060px;color:#969696;font-weight:bold">0.0</span><span class="b" style="left:2120px;color:#ffffff;font-weight:bold">]</span><span style="left:840px;color:#66bdcf"> 69</span><span class="b" style="left:900px;color:#ffffff;font-weight:bold">[</span><span style="left:920px;color:#969696;font-weight:bold">0.0</span><span class="b" style="left:980px;color:#ffffff;font-weight:bold">]</span><span style="left:2140px;color:#66bdcf">165</span><span class="b" style="left:2200px;color:#ffffff;font-weight:bold">[</span><span style="left:2220px;color:#969696;font-weight:bold">0.0</span><span class="b" style="left:2280px;color:#ffffff;font-weight:bold">]</span><span style="left:1000px;color:#66bdcf"> 81</span><span class="b" style="left:1060px;color:#ffffff;font-weight:bold">[</span><span style="left:1080px;color:#969696;font-weight:bold">0.0</span><span class="b" style="left:1140px;color:#ffffff;font-weight:bold">]</span><span style="left:2300px;color:#66bdcf">177</span><span class="b" style="left:2360px;color:#ffffff;font-weight:bold">[</span><span style="left:2380px;color:#969696;font-weight:bold">0.0</span><span class="b" style="left:2440px;color:#ffffff;font-weight:bold">]</span><span style="left:1160px;color:#66bdcf"> 93</span><span class="b" style="left:1220px;color:#ffffff;font-weight:bold">[</span><span style="left:1240px;color:#969696;font-weight:bold">0.0</span><span class="b" style="left:1300px;color:#ffffff;font-weight:bold">]</span><span style="left:2460px;color:#66bdcf">189</span><span class="b" style="left:2520px;color:#ffffff;font-weight:bold">[</span><span style="left:2540px;color:#969696;font-weight:bold">0.0</span><span class="b" style="left:2600px;color:#ffffff;font-weight:bold">]</span></div>
<div class="r" style="top:537px"><span style="left:40px;color:#66bdcf"> 10</span><span class="b" style="left:100px;color:#ffffff;font-weight:bold">[</span><span style="left:120px;color:#969696;font-weight:bold">0.0</span><span class="b" style="left:180px;color:#ffffff;font-weight:bold">]</span><span style="left:1340px;color:#66bdcf">106</span><span class="b" style="left:1400px;color:#ffffff;font-weight:bold">[</span><span style="left:1420px;color:#969696;font-weight:bold">0.0</span><span class="b" style="left:1480px;color:#ffffff;font-weight:bold">]</span><span style="left:200px;color:#66bdcf"> 22</span><span class="b" style="left:260px;color:#ffffff;font-weight:bold">[</span><span style="left:280px;color:#969696;font-weight:bold">0.0</span><span class="b" style="left:340px;color:#ffffff;font-weight:bold">]</span><span style="left:1500px;color:#66bdcf">118</span><span class="b" style="left:1560px;color:#ffffff;font-weight:bold">[</span><span style="left:1580px;color:#969696;font-weight:bold">0.0</span><span class="b" style="left:1640px;color:#ffffff;font-weight:bold">]</span><span style="left:360px;color:#66bdcf"> 34</span><span class="b" style="left:420px;color:#ffffff;font-weight:bold">[</span><span style="left:440px;color:#969696;font-weight:bold">0.0</span><span class="b" style="left:500px;color:#ffffff;font-weight:bold">]</span><span style="left:1660px;color:#66bdcf">130</span><span class="b" style="left:1720px;color:#ffffff;font-weight:bold">[</span><span style="left:1740px;color:#969696;font-weight:bold">0.0</span><span class="b" style="left:1800px;color:#ffffff;font-weight:bold">]</span><span style="left:520px;color:#66bdcf"> 46</span><span class="b" style="left:580px;color:#ffffff;font-weight:bold">[</span><span style="left:600px;color:#969696;font-weight:bold">0.0</span><span class="b" style="left:660px;color:#ffffff;font-weight:bold">]</span><span style="left:1820px;color:#66bdcf">142</span><span class="b" style="left:1880px;color:#ffffff;font-weight:bold">[</span><span style="left:1900px;color:#969696;font-weight:bold">0.0</span><span class="b" style="left:1960px;color:#ffffff;font-weight:bold">]</span><span style="left:680px;color:#66bdcf"> 58</span><span class="b" style="left:740px;color:#ffffff;font-weight:bold">[</span><span style="left:760px;color:#969696;font-weight:bold">0.0</span><span class="b" style="left:820px;color:#ffffff;font-weight:bold">]</span><span style="left:1980px;color:#66bdcf">154</span><span class="b" style="left:2040px;color:#ffffff;font-weight:bold">[</span><span style="left:2060px;color:#969696;font-weight:bold">0.0</span><span class="b" style="left:2120px;color:#ffffff;font-weight:bold">]</span><span style="left:840px;color:#66bdcf"> 70</span><span class="b" style="left:900px;color:#ffffff;font-weight:bold">[</span><span style="left:920px;color:#969696;font-weight:bold">0.0</span><span class="b" style="left:980px;color:#ffffff;font-weight:bold">]</span><span style="left:2140px;color:#66bdcf">166</span><span class="b" style="left:2200px;color:#ffffff;font-weight:bold">[</span><span style="left:2220px;color:#969696;font-weight:bold">0.0</span><span class="b" style="left:2280px;color:#ffffff;font-weight:bold">]</span><span style="left:1000px;color:#66bdcf"> 82</span><span class="b" style="left:1060px;color:#ffffff;font-weight:bold">[</span><span style="left:1080px;color:#969696;font-weight:bold">0.0</span><span class="b" style="left:1140px;color:#ffffff;font-weight:bold">]</span><span style="left:2300px;color:#66bdcf">178</span><span class="b" style="left:2360px;color:#ffffff;font-weight:bold">[</span><span style="left:2380px;color:#969696;font-weight:bold">0.0</span><span class="b" style="left:2440px;color:#ffffff;font-weight:bold">]</span><span style="left:1160px;color:#66bdcf"> 94</span><span class="b" style="left:1220px;color:#ffffff;font-weight:bold">[</span><span style="left:1240px;color:#969696;font-weight:bold">0.0</span><span class="b" style="left:1300px;color:#ffffff;font-weight:bold">]</span><span style="left:2460px;color:#66bdcf">190</span><span class="b" style="left:2520px;color:#ffffff;font-weight:bold">[</span><span style="left:2540px;color:#969696;font-weight:bold">0.0</span><span class="b" style="left:2600px;color:#ffffff;font-weight:bold">]</span></div>
<div class="r" style="top:577px"><span style="left:40px;color:#66bdcf"> 11</span><span class="b" style="left:100px;color:#ffffff;font-weight:bold">[</span><span style="left:120px;color:#969696;font-weight:bold">0.0</span><span class="b" style="left:180px;color:#ffffff;font-weight:bold">]</span><span style="left:1340px;color:#66bdcf">107</span><span class="b" style="left:1400px;color:#ffffff;font-weight:bold">[</span><span style="left:1420px;color:#969696;font-weight:bold">0.0</span><span class="b" style="left:1480px;color:#ffffff;font-weight:bold">]</span><span style="left:200px;color:#66bdcf"> 23</span><span class="b" style="left:260px;color:#ffffff;font-weight:bold">[</span><span style="left:280px;color:#969696;font-weight:bold">0.0</span><span class="b" style="left:340px;color:#ffffff;font-weight:bold">]</span><span style="left:1500px;color:#66bdcf">119</span><span class="b" style="left:1560px;color:#ffffff;font-weight:bold">[</span><span style="left:1580px;color:#969696;font-weight:bold">0.0</span><span class="b" style="left:1640px;color:#ffffff;font-weight:bold">]</span><span style="left:360px;color:#66bdcf"> 35</span><span class="b" style="left:420px;color:#ffffff;font-weight:bold">[</span><span style="left:440px;color:#d75636">0</span><span style="left:460px;color:#969696;font-weight:bold">.7</span><span class="b" style="left:500px;color:#ffffff;font-weight:bold">]</span><span style="left:1660px;color:#66bdcf">131</span><span class="b" style="left:1720px;color:#ffffff;font-weight:bold">[</span><span style="left:1740px;color:#969696;font-weight:bold">0.0</span><span class="b" style="left:1800px;color:#ffffff;font-weight:bold">]</span><span style="left:520px;color:#66bdcf"> 47</span><span class="b" style="left:580px;color:#ffffff;font-weight:bold">[</span><span style="left:600px;color:#969696;font-weight:bold">0.0</span><span class="b" style="left:660px;color:#ffffff;font-weight:bold">]</span><span style="left:1820px;color:#66bdcf">143</span><span class="b" style="left:1880px;color:#ffffff;font-weight:bold">[</span><span style="left:1900px;color:#969696;font-weight:bold">0.0</span><span class="b" style="left:1960px;color:#ffffff;font-weight:bold">]</span><span style="left:680px;color:#66bdcf"> 59</span><span class="b" style="left:740px;color:#ffffff;font-weight:bold">[</span><span style="left:760px;color:#969696;font-weight:bold">0.0</span><span class="b" style="left:820px;color:#ffffff;font-weight:bold">]</span><span style="left:1980px;color:#66bdcf">155</span><span class="b" style="left:2040px;color:#ffffff;font-weight:bold">[</span><span style="left:2060px;color:#969696;font-weight:bold">0.0</span><span class="b" style="left:2120px;color:#ffffff;font-weight:bold">]</span><span style="left:840px;color:#66bdcf"> 71</span><span class="b" style="left:900px;color:#ffffff;font-weight:bold">[</span><span style="left:920px;color:#969696;font-weight:bold">0.0</span><span class="b" style="left:980px;color:#ffffff;font-weight:bold">]</span><span style="left:2140px;color:#66bdcf">167</span><span class="b" style="left:2200px;color:#ffffff;font-weight:bold">[</span><span style="left:2220px;color:#969696;font-weight:bold">0.0</span><span class="b" style="left:2280px;color:#ffffff;font-weight:bold">]</span><span style="left:1000px;color:#66bdcf"> 83</span><span class="b" style="left:1060px;color:#ffffff;font-weight:bold">[</span><span style="left:1080px;color:#969696;font-weight:bold">0.0</span><span class="b" style="left:1140px;color:#ffffff;font-weight:bold">]</span><span style="left:2300px;color:#66bdcf">179</span><span class="b" style="left:2360px;color:#ffffff;font-weight:bold">[</span><span style="left:2380px;color:#969696;font-weight:bold">0.0</span><span class="b" style="left:2440px;color:#ffffff;font-weight:bold">]</span><span style="left:1160px;color:#66bdcf"> 95</span><span class="b" style="left:1220px;color:#ffffff;font-weight:bold">[</span><span style="left:1240px;color:#969696;font-weight:bold">0.0</span><span class="b" style="left:1300px;color:#ffffff;font-weight:bold">]</span><span style="left:2460px;color:#66bdcf">191</span><span class="b" style="left:2520px;color:#ffffff;font-weight:bold">[</span><span style="left:2540px;color:#969696;font-weight:bold">0.0</span><span class="b" style="left:2600px;color:#ffffff;font-weight:bold">]</span></div>
<div class="r" style="top:617px"><span style="left:40px;color:#66bdcf"> 12</span><span class="b" style="left:100px;color:#ffffff;font-weight:bold">[</span><span style="left:120px;color:#d75636">0</span><span style="left:140px;color:#969696;font-weight:bold">.7</span><span class="b" style="left:180px;color:#ffffff;font-weight:bold">]</span><span style="left:1340px;color:#66bdcf">108</span><span class="b" style="left:1400px;color:#ffffff;font-weight:bold">[</span><span style="left:1420px;color:#d75636">0</span><span style="left:1440px;color:#969696;font-weight:bold">.7</span><span class="b" style="left:1480px;color:#ffffff;font-weight:bold">]</span><span style="left:200px;color:#66bdcf"> 24</span><span class="b" style="left:260px;color:#ffffff;font-weight:bold">[</span><span style="left:280px;color:#969696;font-weight:bold">0.0</span><span class="b" style="left:340px;color:#ffffff;font-weight:bold">]</span><span style="left:1500px;color:#66bdcf">120</span><span class="b" style="left:1560px;color:#ffffff;font-weight:bold">[</span><span style="left:1580px;color:#969696;font-weight:bold">0.0</span><span class="b" style="left:1640px;color:#ffffff;font-weight:bold">]</span><span style="left:360px;color:#66bdcf"> 36</span><span class="b" style="left:420px;color:#ffffff;font-weight:bold">[</span><span style="left:440px;color:#969696;font-weight:bold">0.0</span><span class="b" style="left:500px;color:#ffffff;font-weight:bold">]</span><span style="left:1660px;color:#66bdcf">132</span><span class="b" style="left:1720px;color:#ffffff;font-weight:bold">[</span><span style="left:1740px;color:#969696;font-weight:bold">0.0</span><span class="b" style="left:1800px;color:#ffffff;font-weight:bold">]</span><span style="left:520px;color:#66bdcf"> 48</span><span class="b" style="left:580px;color:#ffffff;font-weight:bold">[</span><span style="left:600px;color:#969696;font-weight:bold">0.0</span><span class="b" style="left:660px;color:#ffffff;font-weight:bold">]</span><span style="left:1820px;color:#66bdcf">144</span><span class="b" style="left:1880px;color:#ffffff;font-weight:bold">[</span><span style="left:1900px;color:#969696;font-weight:bold">0.0</span><span class="b" style="left:1960px;color:#ffffff;font-weight:bold">]</span><span style="left:680px;color:#66bdcf"> 60</span><span class="b" style="left:740px;color:#ffffff;font-weight:bold">[</span><span style="left:760px;color:#969696;font-weight:bold">0.0</span><span class="b" style="left:820px;color:#ffffff;font-weight:bold">]</span><span style="left:1980px;color:#66bdcf">156</span><span class="b" style="left:2040px;color:#ffffff;font-weight:bold">[</span><span style="left:2060px;color:#969696;font-weight:bold">0.0</span><span class="b" style="left:2120px;color:#ffffff;font-weight:bold">]</span><span style="left:840px;color:#66bdcf"> 72</span><span class="b" style="left:900px;color:#ffffff;font-weight:bold">[</span><span style="left:920px;color:#969696;font-weight:bold">0.0</span><span class="b" style="left:980px;color:#ffffff;font-weight:bold">]</span><span style="left:2140px;color:#66bdcf">168</span><span class="b" style="left:2200px;color:#ffffff;font-weight:bold">[</span><span style="left:2220px;color:#969696;font-weight:bold">0.0</span><span class="b" style="left:2280px;color:#ffffff;font-weight:bold">]</span><span style="left:1000px;color:#66bdcf"> 84</span><span class="b" style="left:1060px;color:#ffffff;font-weight:bold">[</span><span style="left:1080px;color:#969696;font-weight:bold">0.0</span><span class="b" style="left:1140px;color:#ffffff;font-weight:bold">]</span><span style="left:2300px;color:#66bdcf">180</span><span class="b" style="left:2360px;color:#ffffff;font-weight:bold">[</span><span style="left:2380px;color:#969696;font-weight:bold">0.0</span><span class="b" style="left:2440px;color:#ffffff;font-weight:bold">]</span><span style="left:1160px;color:#66bdcf"> 96</span><span class="b" style="left:1220px;color:#ffffff;font-weight:bold">[</span><span style="left:1240px;color:#969696;font-weight:bold">0.0</span><span class="b" style="left:1300px;color:#ffffff;font-weight:bold">]</span><span style="left:2460px;color:#66bdcf">192</span><span class="b" style="left:2520px;color:#ffffff;font-weight:bold">[</span><span style="left:2540px;color:#969696;font-weight:bold">0.0</span><span class="b" style="left:2600px;color:#ffffff;font-weight:bold">]</span></div>
<div class="r" style="top:657px"><span style="left:40px;color:#66bdcf">Avg</span><span class="b" style="left:100px;color:#ffffff;font-weight:bold">[</span><span style="left:1200px;color:#969696;font-weight:bold">20.3%</span><span class="b" style="left:1300px;color:#ffffff;font-weight:bold">]</span><span style="left:1340px;color:#66bdcf">Tasks: </span><span style="left:1480px;color:#66bdcf;font-weight:bold">99</span><span style="left:1520px;color:#66bdcf">, </span><span style="left:1560px;color:#66c246;font-weight:bold">130</span><span style="left:1620px;color:#66bdcf"> thr, </span><span style="left:1740px;color:#969696;font-weight:bold">2020</span><span style="left:1820px;color:#969696;font-weight:bold"> kthr</span><span style="left:1920px;color:#66bdcf">; </span><span style="left:1960px;color:#66c246;font-weight:bold">43</span><span style="left:2000px;color:#66bdcf"> running</span></div>
<div class="r" style="top:697px"><span style="left:40px;color:#66bdcf">Mem</span><span class="b" style="left:100px;color:#ffffff;font-weight:bold">[</span><span style="left:1100px;color:#969696;font-weight:bold">9.71G/377G</span><span class="b" style="left:1300px;color:#ffffff;font-weight:bold">]</span><span style="left:1340px;color:#66bdcf">Load average: </span><span style="left:1620px;color:#ffffff;font-weight:bold">39.34 </span><span style="left:1740px;color:#66bdcf;font-weight:bold">35.93 </span><span style="left:1860px;color:#66bdcf">23.93</span></div>
<div class="r" style="top:737px"><span style="left:40px;color:#66bdcf">Swp</span><span class="b" style="left:100px;color:#ffffff;font-weight:bold">[</span><span style="left:1140px;color:#969696;font-weight:bold">0K/4.00G</span><span class="b" style="left:1300px;color:#ffffff;font-weight:bold">]</span><span style="left:1340px;color:#66bdcf">Uptime: </span><span style="left:1500px;color:#66bdcf;font-weight:bold">00:58:08</span></div>
<div class="r" style="top:817px"><span style="left:80px;color:#000000">PID</span><span style="left:160px;color:#000000">USER</span><span style="left:380px;color:#000000">PRI</span><span style="left:480px;color:#000000">NI</span><span style="left:560px;color:#000000">VIRT</span><span style="left:700px;color:#000000">RES</span><span style="left:820px;color:#000000">SHR</span><span style="left:900px;color:#000000">S</span><span style="left:980px;color:#000000">CPU%</span><span style="left:1080px;color:#000000">MEM%</span><span style="left:1220px;color:#000000">TIME+</span><span style="left:1360px;color:#000000">Command</span></div>
<div class="r" style="top:857px"><span style="left:0px;color:#000000">  14345 milechin    20   0 13.4G 5065M  306M R 3143.4  1.3  8h59:19 python imagenet.py  a resnet18 /orcd/datasets/001/imagenet/images</span></div>
<div class="r" style="top:897px"><span style="left:0px;color:#ffffff">  14589 milechin    20</span><span style="left:500px;color:#969696;font-weight:bold">0</span><span style="left:540px;color:#66c246">13</span><span style="left:580px;color:#66bdcf">.4</span><span style="left:620px;color:#66c246">G</span><span style="left:660px;color:#66c246">5</span><span style="left:680px;color:#66bdcf">065M</span><span style="left:800px;color:#66bdcf">306M</span><span style="left:900px;color:#66c246">R</span><span style="left:940px;color:#66bdcf"> 100.0</span><span style="left:1100px;color:#ffffff">1.3</span><span style="left:1180px;color:#ffffff">16:07.35</span><span style="left:1360px;color:#66c246">python imagenet.py  a resnet18 /orcd/datasets/001/imagenet/images</span></div>
<div class="r" style="top:937px"><span style="left:0px;color:#ffffff">  14590 milechin    20</span><span style="left:500px;color:#969696;font-weight:bold">0</span><span style="left:540px;color:#66c246">13</span><span style="left:580px;color:#66bdcf">.4</span><span style="left:620px;color:#66c246">G</span><span style="left:660px;color:#66c246">5</span><span style="left:680px;color:#66bdcf">065M</span><span style="left:800px;color:#66bdcf">306M</span><span style="left:900px;color:#66c246">R</span><span style="left:940px;color:#66bdcf"> 100.0</span><span style="left:1100px;color:#ffffff">1.3</span><span style="left:1180px;color:#ffffff">16:43.06</span><span style="left:1360px;color:#66c246">python imagenet.py  a resnet18 /orcd/datasets/001/imagenet/images</span></div>
<div class="r" style="top:977px"><span style="left:0px;color:#ffffff">  14594 milechin    20</span><span style="left:500px;color:#969696;font-weight:bold">0</span><span style="left:540px;color:#66c246">13</span><span style="left:580px;color:#66bdcf">.4</span><span style="left:620px;color:#66c246">G</span><span style="left:660px;color:#66c246">5</span><span style="left:680px;color:#66bdcf">065M</span><span style="left:800px;color:#66bdcf">306M</span><span style="left:900px;color:#66c246">R</span><span style="left:940px;color:#66bdcf"> 100.0</span><span style="left:1100px;color:#ffffff">1.3</span><span style="left:1180px;color:#ffffff">16:19.84</span><span style="left:1360px;color:#66c246">python imagenet.py  a resnet18 /orcd/datasets/001/imagenet/images</span></div>
<div class="r" style="top:1017px"><span style="left:0px;color:#ffffff">  14608 milechin    20</span><span style="left:500px;color:#969696;font-weight:bold">0</span><span style="left:540px;color:#66c246">13</span><span style="left:580px;color:#66bdcf">.4</span><span style="left:620px;color:#66c246">G</span><span style="left:660px;color:#66c246">5</span><span style="left:680px;color:#66bdcf">065M</span><span style="left:800px;color:#66bdcf">306M</span><span style="left:900px;color:#66c246">R</span><span style="left:940px;color:#66bdcf"> 100.0</span><span style="left:1100px;color:#ffffff">1.3</span><span style="left:1180px;color:#ffffff">16:26.84</span><span style="left:1360px;color:#66c246">python imagenet.py  a resnet18 /orcd/datasets/001/imagenet/images</span></div>
<div class="r" style="top:1057px"><span style="left:0px;color:#ffffff">  14609 milechin    20</span><span style="left:500px;color:#969696;font-weight:bold">0</span><span style="left:540px;color:#66c246">13</span><span style="left:580px;color:#66bdcf">.4</span><span style="left:620px;color:#66c246">G</span><span style="left:660px;color:#66c246">5</span><span style="left:680px;color:#66bdcf">065M</span><span style="left:800px;color:#66bdcf">306M</span><span style="left:900px;color:#66c246">R</span><span style="left:940px;color:#66bdcf"> 100.0</span><span style="left:1100px;color:#ffffff">1.3</span><span style="left:1180px;color:#ffffff">17:17.57</span><span style="left:1360px;color:#66c246">python imagenet.py  a resnet18 /orcd/datasets/001/imagenet/images</span></div>
<div class="r" style="top:1097px"><span style="left:0px;color:#ffffff">  14582 milechin    20</span><span style="left:500px;color:#969696;font-weight:bold">0</span><span style="left:540px;color:#66c246">13</span><span style="left:580px;color:#66bdcf">.4</span><span style="left:620px;color:#66c246">G</span><span style="left:660px;color:#66c246">5</span><span style="left:680px;color:#66bdcf">065M</span><span style="left:800px;color:#66bdcf">306M</span><span style="left:900px;color:#66c246">R</span><span style="left:940px;color:#ffffff">  99.4</span><span style="left:1100px;color:#ffffff">1.3</span><span style="left:1180px;color:#ffffff">16:38.44</span><span style="left:1360px;color:#66c246">python imagenet.py  a resnet18 /orcd/datasets/001/imagenet/images</span></div>
<div class="r" style="top:1137px"><span style="left:0px;color:#ffffff">  14585 milechin    20</span><span style="left:500px;color:#969696;font-weight:bold">0</span><span style="left:540px;color:#66c246">13</span><span style="left:580px;color:#66bdcf">.4</span><span style="left:620px;color:#66c246">G</span><span style="left:660px;color:#66c246">5</span><span style="left:680px;color:#66bdcf">065M</span><span style="left:800px;color:#66bdcf">306M</span><span style="left:900px;color:#66c246">R</span><span style="left:940px;color:#ffffff">  99.4</span><span style="left:1100px;color:#ffffff">1.3</span><span style="left:1180px;color:#ffffff">17:15.78</span><span style="left:1360px;color:#66c246">python imagenet.py  a resnet18 /orcd/datasets/001/imagenet/images</span></div>
<div class="r" style="top:1177px"><span style="left:0px;color:#ffffff">  14586 milechin    20</span><span style="left:500px;color:#969696;font-weight:bold">0</span><span style="left:540px;color:#66c246">13</span><span style="left:580px;color:#66bdcf">.4</span><span style="left:620px;color:#66c246">G</span><span style="left:660px;color:#66c246">5</span><span style="left:680px;color:#66bdcf">065M</span><span style="left:800px;color:#66bdcf">306M</span><span style="left:900px;color:#66c246">R</span><span style="left:940px;color:#ffffff">  99.4</span><span style="left:1100px;color:#ffffff">1.3</span><span style="left:1180px;color:#ffffff">17:11.94</span><span style="left:1360px;color:#66c246">python imagenet.py  a resnet18 /orcd/datasets/001/imagenet/images</span></div>
<div class="r" style="top:1217px"><span style="left:0px;color:#ffffff">  14593 milechin    20</span><span style="left:500px;color:#969696;font-weight:bold">0</span><span style="left:540px;color:#66c246">13</span><span style="left:580px;color:#66bdcf">.4</span><span style="left:620px;color:#66c246">G</span><span style="left:660px;color:#66c246">5</span><span style="left:680px;color:#66bdcf">065M</span><span style="left:800px;color:#66bdcf">306M</span><span style="left:900px;color:#66c246">R</span><span style="left:940px;color:#ffffff">  99.4</span><span style="left:1100px;color:#ffffff">1.3</span><span style="left:1180px;color:#ffffff">17:03.60</span><span style="left:1360px;color:#66c246">python imagenet.py  a resnet18 /orcd/datasets/001/imagenet/images</span></div>
<div class="r" style="top:1257px"><span style="left:0px;color:#ffffff">  14598 milechin    20</span><span style="left:500px;color:#969696;font-weight:bold">0</span><span style="left:540px;color:#66c246">13</span><span style="left:580px;color:#66bdcf">.4</span><span style="left:620px;color:#66c246">G</span><span style="left:660px;color:#66c246">5</span><span style="left:680px;color:#66bdcf">065M</span><span style="left:800px;color:#66bdcf">306M</span><span style="left:900px;color:#66c246">R</span><span style="left:940px;color:#ffffff">  99.4</span><span style="left:1100px;color:#ffffff">1.3</span><span style="left:1180px;color:#ffffff">17:09.91</span><span style="left:1360px;color:#66c246">python imagenet.py  a resnet18 /orcd/datasets/001/imagenet/images</span></div>
<div class="r" style="top:1297px"><span style="left:0px;color:#ffffff">  14599 milechin    20</span><span style="left:500px;color:#969696;font-weight:bold">0</span><span style="left:540px;color:#66c246">13</span><span style="left:580px;color:#66bdcf">.4</span><span style="left:620px;color:#66c246">G</span><span style="left:660px;color:#66c246">5</span><span style="left:680px;color:#66bdcf">065M</span><span style="left:800px;color:#66bdcf">306M</span><span style="left:900px;color:#66c246">R</span><span style="left:940px;color:#ffffff">  99.4</span><span style="left:1100px;color:#ffffff">1.3</span><span style="left:1180px;color:#ffffff">16:55.98</span><span style="left:1360px;color:#66c246">python imagenet.py  a resnet18 /orcd/datasets/001/imagenet/images</span></div>
<div class="r" style="top:1337px"><span style="left:0px;color:#ffffff">  14602 milechin    20</span><span style="left:500px;color:#969696;font-weight:bold">0</span><span style="left:540px;color:#66c246">13</span><span style="left:580px;color:#66bdcf">.4</span><span style="left:620px;color:#66c246">G</span><span style="left:660px;color:#66c246">5</span><span style="left:680px;color:#66bdcf">065M</span><span style="left:800px;color:#66bdcf">306M</span><span style="left:900px;color:#66c246">R</span><span style="left:940px;color:#ffffff">  99.4</span><span style="left:1100px;color:#ffffff">1.3</span><span style="left:1180px;color:#ffffff">16:14.02</span><span style="left:1360px;color:#66c246">python imagenet.py  a resnet18 /orcd/datasets/001/imagenet/images</span></div>
<div class="r" style="top:1377px"><span style="left:0px;color:#ffffff">  14603 milechin    20</span><span style="left:500px;color:#969696;font-weight:bold">0</span><span style="left:540px;color:#66c246">13</span><span style="left:580px;color:#66bdcf">.4</span><span style="left:620px;color:#66c246">G</span><span style="left:660px;color:#66c246">5</span><span style="left:680px;color:#66bdcf">065M</span><span style="left:800px;color:#66bdcf">306M</span><span style="left:900px;color:#66c246">R</span><span style="left:940px;color:#ffffff">  99.4</span><span style="left:1100px;color:#ffffff">1.3</span><span style="left:1180px;color:#ffffff">16:55.36</span><span style="left:1360px;color:#66c246">python imagenet.py  a resnet18 /orcd/datasets/001/imagenet/images</span></div>
<div class="r" style="top:1417px"><span style="left:0px;color:#ffffff">  14604 milechin    20</span><span style="left:500px;color:#969696;font-weight:bold">0</span><span style="left:540px;color:#66c246">13</span><span style="left:580px;color:#66bdcf">.4</span><span style="left:620px;color:#66c246">G</span><span style="left:660px;color:#66c246">5</span><span style="left:680px;color:#66bdcf">065M</span><span style="left:800px;color:#66bdcf">306M</span><span style="left:900px;color:#66c246">R</span><span style="left:940px;color:#ffffff">  99.4</span><span style="left:1100px;color:#ffffff">1.3</span><span style="left:1180px;color:#ffffff">16:45.06</span><span style="left:1360px;color:#66c246">python imagenet.py  a resnet18 /orcd/datasets/001/imagenet/images</span></div>
<div class="r" style="top:1457px"><span style="left:0px;color:#ffffff">  14605 milechin    20</span><span style="left:500px;color:#969696;font-weight:bold">0</span><span style="left:540px;color:#66c246">13</span><span style="left:580px;color:#66bdcf">.4</span><span style="left:620px;color:#66c246">G</span><span style="left:660px;color:#66c246">5</span><span style="left:680px;color:#66bdcf">065M</span><span style="left:800px;color:#66bdcf">306M</span><span style="left:900px;color:#66c246">R</span><span style="left:940px;color:#ffffff">  99.4</span><span style="left:1100px;color:#ffffff">1.3</span><span style="left:1180px;color:#ffffff">15:50.76</span><span style="left:1360px;color:#66c246">python imagenet.py  a resnet18 /orcd/datasets/001/imagenet/images</span></div>
<div class="r" style="top:1497px"><span style="left:0px;color:#ffffff">  14607 milechin    20</span><span style="left:500px;color:#969696;font-weight:bold">0</span><span style="left:540px;color:#66c246">13</span><span style="left:580px;color:#66bdcf">.4</span><span style="left:620px;color:#66c246">G</span><span style="left:660px;color:#66c246">5</span><span style="left:680px;color:#66bdcf">065M</span><span style="left:800px;color:#66bdcf">306M</span><span style="left:900px;color:#66c246">R</span><span style="left:940px;color:#ffffff">  99.4</span><span style="left:1100px;color:#ffffff">1.3</span><span style="left:1180px;color:#ffffff">16:56.73</span><span style="left:1360px;color:#66c246">python imagenet.py  a resnet18 /orcd/datasets/001/imagenet/images</span></div>
<div class="r" style="top:1537px"><span style="left:0px;color:#ffffff">  14588 milechin    20</span><span style="left:500px;color:#969696;font-weight:bold">0</span><span style="left:540px;color:#66c246">13</span><span style="left:580px;color:#66bdcf">.4</span><span style="left:620px;color:#66c246">G</span><span style="left:660px;color:#66c246">5</span><span style="left:680px;color:#66bdcf">065M</span><span style="left:800px;color:#66bdcf">306M</span><span style="left:900px;color:#66c246">R</span><span style="left:940px;color:#ffffff">  98.7</span><span style="left:1100px;color:#ffffff">1.3</span><span style="left:1180px;color:#ffffff">17:20.74</span><span style="left:1360px;color:#66c246">python imagenet.py  a resnet18 /orcd/datasets/001/imagenet/images</span></div>
<div class="r" style="top:1577px"><span style="left:0px;color:#ffffff">F1</span><span style="left:40px;color:#000000">Help  </span><span style="left:160px;color:#ffffff">F2</span><span style="left:200px;color:#000000">Setup </span><span style="left:320px;color:#ffffff">F3</span><span style="left:360px;color:#000000">Search</span><span style="left:480px;color:#ffffff">F4</span><span style="left:520px;color:#000000">Filter</span><span style="left:640px;color:#ffffff">F5</span><span style="left:680px;color:#000000">Tree  </span><span style="left:800px;color:#ffffff">F6</span><span style="left:840px;color:#000000">SortBy</span><span style="left:960px;color:#ffffff">F7</span><span style="left:1000px;color:#000000">Nice  </span><span style="left:1120px;color:#ffffff">F8</span><span style="left:1160px;color:#000000">Nice +</span><span style="left:1280px;color:#ffffff">F9</span><span style="left:1320px;color:#000000">Kill  </span><span style="left:1440px;color:#ffffff">F10</span><span style="left:1500px;color:#000000">Quit</span></div>
<i class="z" style="left:262px;top:174px;--c:#66c246;--b:#1e1e1e"></i>
<i class="z" style="left:282px;top:174px;--c:#66c246;--b:#1e1e1e"></i>
<i class="z" style="left:1562px;top:174px;--c:#66c246;--b:#1e1e1e"></i>
<i class="z" style="left:1582px;top:174px;--c:#66c246;--b:#1e1e1e"></i>
<i class="z" style="left:422px;top:174px;--c:#66c246;--b:#1e1e1e"></i>
<i class="z" style="left:442px;top:174px;--c:#66c246;--b:#1e1e1e"></i>
<i class="z" style="left:1642px;top:174px;--c:#66bdcf;--b:#1e1e1e"></i>
<i class="z" style="left:1722px;top:174px;--c:#66c246;--b:#1e1e1e"></i>
<i class="z" style="left:1742px;top:174px;--c:#66c246;--b:#1e1e1e"></i>
<i class="z k" style="left:562px;top:174px;--c:#969696;--b:#1e1e1e"></i>
<i class="z k" style="left:602px;top:174px;--c:#969696;--b:#1e1e1e"></i>
<i class="z" style="left:1882px;top:174px;--c:#66c246;--b:#1e1e1e"></i>
<i class="z" style="left:1902px;top:174px;--c:#66c246;--b:#1e1e1e"></i>
<i class="z" style="left:742px;top:174px;--c:#66c246;--b:#1e1e1e"></i>
<i class="z" style="left:762px;top:174px;--c:#66c246;--b:#1e1e1e"></i>
<i class="z" style="left:2042px;top:174px;--c:#66c246;--b:#1e1e1e"></i>
<i class="z" style="left:2062px;top:174px;--c:#66c246;--b:#1e1e1e"></i>
<i class="z k" style="left:882px;top:174px;--c:#969696;--b:#1e1e1e"></i>
<i class="z k" style="left:922px;top:174px;--c:#969696;--b:#1e1e1e"></i>
<i class="z" style="left:2202px;top:174px;--c:#d75636;--b:#1e1e1e"></i>
<i class="z" style="left:2222px;top:174px;--c:#d75636;--b:#1e1e1e"></i>
<i class="z k" style="left:1042px;top:174px;--c:#969696;--b:#1e1e1e"></i>
<i class="z k" style="left:1082px;top:174px;--c:#969696;--b:#1e1e1e"></i>
<i class="z k" style="left:2342px;top:174px;--c:#969696;--b:#1e1e1e"></i>
<i class="z k" style="left:2382px;top:174px;--c:#969696;--b:#1e1e1e"></i>
<i class="z k" style="left:1202px;top:174px;--c:#969696;--b:#1e1e1e"></i>
<i class="z k" style="left:1242px;top:174px;--c:#969696;--b:#1e1e1e"></i>
<i class="z k" style="left:2502px;top:174px;--c:#969696;--b:#1e1e1e"></i>
<i class="z k" style="left:2542px;top:174px;--c:#969696;--b:#1e1e1e"></i>
<i class="z k" style="left:1362px;top:174px;--c:#969696;--b:#1e1e1e"></i>
<i class="z k" style="left:1402px;top:174px;--c:#969696;--b:#1e1e1e"></i>
<i class="z k" style="left:2662px;top:174px;--c:#969696;--b:#1e1e1e"></i>
<i class="z k" style="left:2702px;top:174px;--c:#969696;--b:#1e1e1e"></i>
<i class="z" style="left:262px;top:214px;--c:#66c246;--b:#1e1e1e"></i>
<i class="z" style="left:282px;top:214px;--c:#66c246;--b:#1e1e1e"></i>
<i class="z" style="left:1562px;top:214px;--c:#66c246;--b:#1e1e1e"></i>
<i class="z" style="left:1582px;top:214px;--c:#66c246;--b:#1e1e1e"></i>
<i class="z" style="left:422px;top:214px;--c:#66c246;--b:#1e1e1e"></i>
<i class="z" style="left:442px;top:214px;--c:#66c246;--b:#1e1e1e"></i>
<i class="z" style="left:1662px;top:214px;--c:#66bdcf;--b:#1e1e1e"></i>
<i class="z" style="left:1722px;top:214px;--c:#66c246;--b:#1e1e1e"></i>
<i class="z" style="left:1742px;top:214px;--c:#66c246;--b:#1e1e1e"></i>
<i class="z" style="left:582px;top:214px;--c:#66c246;--b:#1e1e1e"></i>
<i class="z" style="left:602px;top:214px;--c:#66c246;--b:#1e1e1e"></i>
<i class="z k" style="left:1862px;top:214px;--c:#969696;--b:#1e1e1e"></i>
<i class="z k" style="left:1902px;top:214px;--c:#969696;--b:#1e1e1e"></i>
<i class="z" style="left:742px;top:214px;--c:#66c246;--b:#1e1e1e"></i>
<i class="z" style="left:762px;top:214px;--c:#66c246;--b:#1e1e1e"></i>
<i class="z" style="left:2042px;top:214px;--c:#66c246;--b:#1e1e1e"></i>
<i class="z" style="left:2062px;top:214px;--c:#66c246;--b:#1e1e1e"></i>
<i class="z" style="left:842px;top:214px;--c:#66bdcf;--b:#1e1e1e"></i>
<i class="z k" style="left:882px;top:214px;--c:#969696;--b:#1e1e1e"></i>
<i class="z k" style="left:922px;top:214px;--c:#969696;--b:#1e1e1e"></i>
<i class="z k" style="left:2182px;top:214px;--c:#969696;--b:#1e1e1e"></i>
<i class="z k" style="left:2222px;top:214px;--c:#969696;--b:#1e1e1e"></i>
<i class="z k" style="left:1042px;top:214px;--c:#969696;--b:#1e1e1e"></i>
<i class="z k" style="left:1082px;top:214px;--c:#969696;--b:#1e1e1e"></i>
<i class="z k" style="left:2342px;top:214px;--c:#969696;--b:#1e1e1e"></i>
<i class="z k" style="left:2382px;top:214px;--c:#969696;--b:#1e1e1e"></i>
<i class="z k" style="left:1202px;top:214px;--c:#969696;--b:#1e1e1e"></i>
<i class="z k" style="left:1242px;top:214px;--c:#969696;--b:#1e1e1e"></i>
<i class="z" style="left:2462px;top:214px;--c:#66bdcf;--b:#1e1e1e"></i>
<i class="z k" style="left:1362px;top:214px;--c:#969696;--b:#1e1e1e"></i>
<i class="z k" style="left:1402px;top:214px;--c:#969696;--b:#1e1e1e"></i>
<i class="z k" style="left:2662px;top:214px;--c:#969696;--b:#1e1e1e"></i>
<i class="z k" style="left:2702px;top:214px;--c:#969696;--b:#1e1e1e"></i>
<i class="z" style="left:262px;top:254px;--c:#66c246;--b:#1e1e1e"></i>
<i class="z" style="left:282px;top:254px;--c:#66c246;--b:#1e1e1e"></i>
<i class="z" style="left:1562px;top:254px;--c:#66c246;--b:#1e1e1e"></i>
<i class="z" style="left:1582px;top:254px;--c:#66c246;--b:#1e1e1e"></i>
<i class="z" style="left:422px;top:254px;--c:#66c246;--b:#1e1e1e"></i>
<i class="z" style="left:442px;top:254px;--c:#66c246;--b:#1e1e1e"></i>
<i class="z" style="left:1722px;top:254px;--c:#66c246;--b:#1e1e1e"></i>
<i class="z" style="left:1742px;top:254px;--c:#66c246;--b:#1e1e1e"></i>
<i class="z k" style="left:562px;top:254px;--c:#969696;--b:#1e1e1e"></i>
<i class="z k" style="left:602px;top:254px;--c:#969696;--b:#1e1e1e"></i>
<i class="z" style="left:1882px;top:254px;--c:#66c246;--b:#1e1e1e"></i>
<i class="z" style="left:1902px;top:254px;--c:#66c246;--b:#1e1e1e"></i>
<i class="z" style="left:742px;top:254px;--c:#66c246;--b:#1e1e1e"></i>
<i class="z" style="left:762px;top:254px;--c:#66c246;--b:#1e1e1e"></i>
<i class="z" style="left:2042px;top:254px;--c:#66c246;--b:#1e1e1e"></i>
<i class="z" style="left:2062px;top:254px;--c:#66c246;--b:#1e1e1e"></i>
<i class="z k" style="left:882px;top:254px;--c:#969696;--b:#1e1e1e"></i>
<i class="z k" style="left:922px;top:254px;--c:#969696;--b:#1e1e1e"></i>
<i class="z k" style="left:2182px;top:254px;--c:#969696;--b:#1e1e1e"></i>
<i class="z k" style="left:2222px;top:254px;--c:#969696;--b:#1e1e1e"></i>
<i class="z k" style="left:1042px;top:254px;--c:#969696;--b:#1e1e1e"></i>
<i class="z k" style="left:1082px;top:254px;--c:#969696;--b:#1e1e1e"></i>
<i class="z k" style="left:2342px;top:254px;--c:#969696;--b:#1e1e1e"></i>
<i class="z k" style="left:2382px;top:254px;--c:#969696;--b:#1e1e1e"></i>
<i class="z k" style="left:1202px;top:254px;--c:#969696;--b:#1e1e1e"></i>
<i class="z k" style="left:1242px;top:254px;--c:#969696;--b:#1e1e1e"></i>
<i class="z k" style="left:2502px;top:254px;--c:#969696;--b:#1e1e1e"></i>
<i class="z k" style="left:2542px;top:254px;--c:#969696;--b:#1e1e1e"></i>
<i class="z k" style="left:1362px;top:254px;--c:#969696;--b:#1e1e1e"></i>
<i class="z k" style="left:1402px;top:254px;--c:#969696;--b:#1e1e1e"></i>
<i class="z k" style="left:2662px;top:254px;--c:#969696;--b:#1e1e1e"></i>
<i class="z k" style="left:2702px;top:254px;--c:#969696;--b:#1e1e1e"></i>
<i class="z" style="left:262px;top:294px;--c:#66c246;--b:#1e1e1e"></i>
<i class="z" style="left:282px;top:294px;--c:#66c246;--b:#1e1e1e"></i>
<i class="z" style="left:1482px;top:294px;--c:#66bdcf;--b:#1e1e1e"></i>
<i class="z" style="left:1502px;top:294px;--c:#66bdcf;--b:#1e1e1e"></i>
<i class="z" style="left:1562px;top:294px;--c:#66c246;--b:#1e1e1e"></i>
<i class="z" style="left:1582px;top:294px;--c:#66c246;--b:#1e1e1e"></i>
<i class="z" style="left:422px;top:294px;--c:#66c246;--b:#1e1e1e"></i>
<i class="z" style="left:442px;top:294px;--c:#66c246;--b:#1e1e1e"></i>
<i class="z" style="left:1722px;top:294px;--c:#66c246;--b:#1e1e1e"></i>
<i class="z" style="left:1742px;top:294px;--c:#66c246;--b:#1e1e1e"></i>
<i class="z k" style="left:1862px;top:294px;--c:#969696;--b:#1e1e1e"></i>
<i class="z k" style="left:1902px;top:294px;--c:#969696;--b:#1e1e1e"></i>
<i class="z" style="left:682px;top:294px;--c:#66bdcf;--b:#1e1e1e"></i>
<i class="z" style="left:742px;top:294px;--c:#66c246;--b:#1e1e1e"></i>
<i class="z" style="left:762px;top:294px;--c:#66c246;--b:#1e1e1e"></i>
<i class="z" style="left:2042px;top:294px;--c:#66c246;--b:#1e1e1e"></i>
<i class="z" style="left:2062px;top:294px;--c:#66c246;--b:#1e1e1e"></i>
<i class="z k" style="left:882px;top:294px;--c:#969696;--b:#1e1e1e"></i>
<i class="z k" style="left:922px;top:294px;--c:#969696;--b:#1e1e1e"></i>
<i class="z k" style="left:2182px;top:294px;--c:#969696;--b:#1e1e1e"></i>
<i class="z k" style="left:2222px;top:294px;--c:#969696;--b:#1e1e1e"></i>
<i class="z k" style="left:1042px;top:294px;--c:#969696;--b:#1e1e1e"></i>
<i class="z k" style="left:1082px;top:294px;--c:#969696;--b:#1e1e1e"></i>
<i class="z" style="left:2302px;top:294px;--c:#66bdcf;--b:#1e1e1e"></i>
<i class="z k" style="left:2342px;top:294px;--c:#969696;--b:#1e1e1e"></i>
<i class="z k" style="left:2382px;top:294px;--c:#969696;--b:#1e1e1e"></i>
<i class="z k" style="left:1202px;top:294px;--c:#969696;--b:#1e1e1e"></i>
<i class="z k" style="left:1242px;top:294px;--c:#969696;--b:#1e1e1e"></i>
<i class="z k" style="left:2502px;top:294px;--c:#969696;--b:#1e1e1e"></i>
<i class="z k" style="left:2542px;top:294px;--c:#969696;--b:#1e1e1e"></i>
<i class="z k" style="left:2662px;top:294px;--c:#969696;--b:#1e1e1e"></i>
<i class="z k" style="left:2702px;top:294px;--c:#969696;--b:#1e1e1e"></i>
<i class="z" style="left:262px;top:334px;--c:#66c246;--b:#1e1e1e"></i>
<i class="z" style="left:282px;top:334px;--c:#66c246;--b:#1e1e1e"></i>
<i class="z" style="left:1482px;top:334px;--c:#66bdcf;--b:#1e1e1e"></i>
<i class="z" style="left:1562px;top:334px;--c:#66c246;--b:#1e1e1e"></i>
<i class="z" style="left:1582px;top:334px;--c:#66c246;--b:#1e1e1e"></i>
<i class="z" style="left:422px;top:334px;--c:#66c246;--b:#1e1e1e"></i>
<i class="z" style="left:442px;top:334px;--c:#66c246;--b:#1e1e1e"></i>
<i class="z k" style="left:1702px;top:334px;--c:#969696;--b:#1e1e1e"></i>
<i class="z k" style="left:1742px;top:334px;--c:#969696;--b:#1e1e1e"></i>
<i class="z" style="left:562px;top:334px;--c:#d75636;--b:#1e1e1e"></i>
<i class="z k" style="left:1862px;top:334px;--c:#969696;--b:#1e1e1e"></i>
<i class="z k" style="left:1902px;top:334px;--c:#969696;--b:#1e1e1e"></i>
<i class="z" style="left:742px;top:334px;--c:#66c246;--b:#1e1e1e"></i>
<i class="z" style="left:762px;top:334px;--c:#66c246;--b:#1e1e1e"></i>
<i class="z" style="left:2042px;top:334px;--c:#66c246;--b:#1e1e1e"></i>
<i class="z" style="left:2062px;top:334px;--c:#66c246;--b:#1e1e1e"></i>
<i class="z k" style="left:882px;top:334px;--c:#969696;--b:#1e1e1e"></i>
<i class="z k" style="left:922px;top:334px;--c:#969696;--b:#1e1e1e"></i>
<i class="z k" style="left:2182px;top:334px;--c:#969696;--b:#1e1e1e"></i>
<i class="z k" style="left:2222px;top:334px;--c:#969696;--b:#1e1e1e"></i>
<i class="z k" style="left:1042px;top:334px;--c:#969696;--b:#1e1e1e"></i>
<i class="z k" style="left:1082px;top:334px;--c:#969696;--b:#1e1e1e"></i>
<i class="z k" style="left:2342px;top:334px;--c:#969696;--b:#1e1e1e"></i>
<i class="z k" style="left:2382px;top:334px;--c:#969696;--b:#1e1e1e"></i>
<i class="z k" style="left:1202px;top:334px;--c:#969696;--b:#1e1e1e"></i>
<i class="z k" style="left:1242px;top:334px;--c:#969696;--b:#1e1e1e"></i>
<i class="z k" style="left:2502px;top:334px;--c:#969696;--b:#1e1e1e"></i>
<i class="z k" style="left:2542px;top:334px;--c:#969696;--b:#1e1e1e"></i>
<i class="z k" style="left:1362px;top:334px;--c:#969696;--b:#1e1e1e"></i>
<i class="z k" style="left:1402px;top:334px;--c:#969696;--b:#1e1e1e"></i>
<i class="z k" style="left:2662px;top:334px;--c:#969696;--b:#1e1e1e"></i>
<i class="z k" style="left:2702px;top:334px;--c:#969696;--b:#1e1e1e"></i>
<i class="z" style="left:262px;top:374px;--c:#66c246;--b:#1e1e1e"></i>
<i class="z" style="left:282px;top:374px;--c:#66c246;--b:#1e1e1e"></i>
<i class="z" style="left:1482px;top:374px;--c:#66bdcf;--b:#1e1e1e"></i>
<i class="z" style="left:1562px;top:374px;--c:#66c246;--b:#1e1e1e"></i>
<i class="z" style="left:1582px;top:374px;--c:#66c246;--b:#1e1e1e"></i>
<i class="z k" style="left:402px;top:374px;--c:#969696;--b:#1e1e1e"></i>
<i class="z k" style="left:442px;top:374px;--c:#969696;--b:#1e1e1e"></i>
<i class="z" style="left:1722px;top:374px;--c:#66c246;--b:#1e1e1e"></i>
<i class="z" style="left:1742px;top:374px;--c:#66c246;--b:#1e1e1e"></i>
<i class="z" style="left:522px;top:374px;--c:#66bdcf;--b:#1e1e1e"></i>
<i class="z k" style="left:562px;top:374px;--c:#969696;--b:#1e1e1e"></i>
<i class="z k" style="left:602px;top:374px;--c:#969696;--b:#1e1e1e"></i>
<i class="z k" style="left:1862px;top:374px;--c:#969696;--b:#1e1e1e"></i>
<i class="z k" style="left:1902px;top:374px;--c:#969696;--b:#1e1e1e"></i>
<i class="z" style="left:742px;top:374px;--c:#66c246;--b:#1e1e1e"></i>
<i class="z" style="left:762px;top:374px;--c:#66c246;--b:#1e1e1e"></i>
<i class="z" style="left:2042px;top:374px;--c:#66c246;--b:#1e1e1e"></i>
<i class="z" style="left:2062px;top:374px;--c:#66c246;--b:#1e1e1e"></i>
<i class="z k" style="left:882px;top:374px;--c:#969696;--b:#1e1e1e"></i>
<i class="z k" style="left:922px;top:374px;--c:#969696;--b:#1e1e1e"></i>
<i class="z" style="left:2142px;top:374px;--c:#66bdcf;--b:#1e1e1e"></i>
<i class="z k" style="left:2182px;top:374px;--c:#969696;--b:#1e1e1e"></i>
<i class="z k" style="left:2222px;top:374px;--c:#969696;--b:#1e1e1e"></i>
<i class="z k" style="left:1042px;top:374px;--c:#969696;--b:#1e1e1e"></i>
<i class="z k" style="left:1082px;top:374px;--c:#969696;--b:#1e1e1e"></i>
<i class="z k" style="left:2342px;top:374px;--c:#969696;--b:#1e1e1e"></i>
<i class="z k" style="left:2382px;top:374px;--c:#969696;--b:#1e1e1e"></i>
<i class="z k" style="left:1202px;top:374px;--c:#969696;--b:#1e1e1e"></i>
<i class="z k" style="left:1242px;top:374px;--c:#969696;--b:#1e1e1e"></i>
<i class="z k" style="left:2502px;top:374px;--c:#969696;--b:#1e1e1e"></i>
<i class="z k" style="left:2542px;top:374px;--c:#969696;--b:#1e1e1e"></i>
<i class="z" style="left:1322px;top:374px;--c:#66bdcf;--b:#1e1e1e"></i>
<i class="z k" style="left:1362px;top:374px;--c:#969696;--b:#1e1e1e"></i>
<i class="z k" style="left:1402px;top:374px;--c:#969696;--b:#1e1e1e"></i>
<i class="z k" style="left:2662px;top:374px;--c:#969696;--b:#1e1e1e"></i>
<i class="z k" style="left:2702px;top:374px;--c:#969696;--b:#1e1e1e"></i>
<i class="z" style="left:1482px;top:414px;--c:#66bdcf;--b:#1e1e1e"></i>
<i class="z k" style="left:1542px;top:414px;--c:#969696;--b:#1e1e1e"></i>
<i class="z k" style="left:1582px;top:414px;--c:#969696;--b:#1e1e1e"></i>
<i class="z k" style="left:402px;top:414px;--c:#969696;--b:#1e1e1e"></i>
<i class="z k" style="left:442px;top:414px;--c:#969696;--b:#1e1e1e"></i>
<i class="z k" style="left:1702px;top:414px;--c:#969696;--b:#1e1e1e"></i>
<i class="z k" style="left:1742px;top:414px;--c:#969696;--b:#1e1e1e"></i>
<i class="z k" style="left:562px;top:414px;--c:#969696;--b:#1e1e1e"></i>
<i class="z k" style="left:602px;top:414px;--c:#969696;--b:#1e1e1e"></i>
<i class="z k" style="left:1862px;top:414px;--c:#969696;--b:#1e1e1e"></i>
<i class="z k" style="left:1902px;top:414px;--c:#969696;--b:#1e1e1e"></i>
<i class="z k" style="left:722px;top:414px;--c:#969696;--b:#1e1e1e"></i>
<i class="z k" style="left:762px;top:414px;--c:#969696;--b:#1e1e1e"></i>
<i class="z k" style="left:2022px;top:414px;--c:#969696;--b:#1e1e1e"></i>
<i class="z k" style="left:2062px;top:414px;--c:#969696;--b:#1e1e1e"></i>
<i class="z k" style="left:882px;top:414px;--c:#969696;--b:#1e1e1e"></i>
<i class="z k" style="left:922px;top:414px;--c:#969696;--b:#1e1e1e"></i>
<i class="z k" style="left:2182px;top:414px;--c:#969696;--b:#1e1e1e"></i>
<i class="z k" style="left:2222px;top:414px;--c:#969696;--b:#1e1e1e"></i>
<i class="z k" style="left:1042px;top:414px;--c:#969696;--b:#1e1e1e"></i>
<i class="z k" style="left:1082px;top:414px;--c:#969696;--b:#1e1e1e"></i>
<i class="z k" style="left:2342px;top:414px;--c:#969696;--b:#1e1e1e"></i>
<i class="z k" style="left:2382px;top:414px;--c:#969696;--b:#1e1e1e"></i>
<i class="z k" style="left:1202px;top:414px;--c:#969696;--b:#1e1e1e"></i>
<i class="z k" style="left:1242px;top:414px;--c:#969696;--b:#1e1e1e"></i>
<i class="z k" style="left:2502px;top:414px;--c:#969696;--b:#1e1e1e"></i>
<i class="z k" style="left:2542px;top:414px;--c:#969696;--b:#1e1e1e"></i>
<i class="z k" style="left:1362px;top:414px;--c:#969696;--b:#1e1e1e"></i>
<i class="z k" style="left:1402px;top:414px;--c:#969696;--b:#1e1e1e"></i>
<i class="z k" style="left:2662px;top:414px;--c:#969696;--b:#1e1e1e"></i>
<i class="z k" style="left:2702px;top:414px;--c:#969696;--b:#1e1e1e"></i>
<i class="z k" style="left:242px;top:454px;--c:#969696;--b:#1e1e1e"></i>
<i class="z k" style="left:282px;top:454px;--c:#969696;--b:#1e1e1e"></i>
<i class="z" style="left:1482px;top:454px;--c:#66bdcf;--b:#1e1e1e"></i>
<i class="z k" style="left:1542px;top:454px;--c:#969696;--b:#1e1e1e"></i>
<i class="z k" style="left:1582px;top:454px;--c:#969696;--b:#1e1e1e"></i>
<i class="z" style="left:362px;top:454px;--c:#66bdcf;--b:#1e1e1e"></i>
<i class="z k" style="left:402px;top:454px;--c:#969696;--b:#1e1e1e"></i>
<i class="z k" style="left:442px;top:454px;--c:#969696;--b:#1e1e1e"></i>
<i class="z k" style="left:1702px;top:454px;--c:#969696;--b:#1e1e1e"></i>
<i class="z k" style="left:1742px;top:454px;--c:#969696;--b:#1e1e1e"></i>
<i class="z" style="left:562px;top:454px;--c:#d75636;--b:#1e1e1e"></i>
<i class="z k" style="left:1862px;top:454px;--c:#969696;--b:#1e1e1e"></i>
<i class="z k" style="left:1902px;top:454px;--c:#969696;--b:#1e1e1e"></i>
<i class="z k" style="left:722px;top:454px;--c:#969696;--b:#1e1e1e"></i>
<i class="z k" style="left:762px;top:454px;--c:#969696;--b:#1e1e1e"></i>
<i class="z" style="left:1982px;top:454px;--c:#66bdcf;--b:#1e1e1e"></i>
<i class="z k" style="left:2022px;top:454px;--c:#969696;--b:#1e1e1e"></i>
<i class="z k" style="left:2062px;top:454px;--c:#969696;--b:#1e1e1e"></i>
<i class="z k" style="left:882px;top:454px;--c:#969696;--b:#1e1e1e"></i>
<i class="z k" style="left:922px;top:454px;--c:#969696;--b:#1e1e1e"></i>
<i class="z k" style="left:2182px;top:454px;--c:#969696;--b:#1e1e1e"></i>
<i class="z k" style="left:2222px;top:454px;--c:#969696;--b:#1e1e1e"></i>
<i class="z k" style="left:1042px;top:454px;--c:#969696;--b:#1e1e1e"></i>
<i class="z k" style="left:1082px;top:454px;--c:#969696;--b:#1e1e1e"></i>
<i class="z k" style="left:2342px;top:454px;--c:#969696;--b:#1e1e1e"></i>
<i class="z k" style="left:2382px;top:454px;--c:#969696;--b:#1e1e1e"></i>
<i class="z" style="left:1162px;top:454px;--c:#66bdcf;--b:#1e1e1e"></i>
<i class="z k" style="left:1202px;top:454px;--c:#969696;--b:#1e1e1e"></i>
<i class="z k" style="left:1242px;top:454px;--c:#969696;--b:#1e1e1e"></i>
<i class="z k" style="left:2502px;top:454px;--c:#969696;--b:#1e1e1e"></i>
<i class="z k" style="left:2542px;top:454px;--c:#969696;--b:#1e1e1e"></i>
<i class="z k" style="left:1362px;top:454px;--c:#969696;--b:#1e1e1e"></i>
<i class="z k" style="left:1402px;top:454px;--c:#969696;--b:#1e1e1e"></i>
<i class="z k" style="left:2662px;top:454px;--c:#969696;--b:#1e1e1e"></i>
<i class="z k" style="left:2702px;top:454px;--c:#969696;--b:#1e1e1e"></i>
<i class="z k" style="left:242px;top:494px;--c:#969696;--b:#1e1e1e"></i>
<i class="z k" style="left:282px;top:494px;--c:#969696;--b:#1e1e1e"></i>
<i class="z" style="left:1482px;top:494px;--c:#66bdcf;--b:#1e1e1e"></i>
<i class="z k" style="left:1542px;top:494px;--c:#969696;--b:#1e1e1e"></i>
<i class="z k" style="left:1582px;top:494px;--c:#969696;--b:#1e1e1e"></i>
<i class="z k" style="left:402px;top:494px;--c:#969696;--b:#1e1e1e"></i>
<i class="z k" style="left:442px;top:494px;--c:#969696;--b:#1e1e1e"></i>
<i class="z k" style="left:1702px;top:494px;--c:#969696;--b:#1e1e1e"></i>
<i class="z k" style="left:1742px;top:494px;--c:#969696;--b:#1e1e1e"></i>
<i class="z" style="left:562px;top:494px;--c:#d75636;--b:#1e1e1e"></i>
<i class="z k" style="left:1862px;top:494px;--c:#969696;--b:#1e1e1e"></i>
<i class="z k" style="left:1902px;top:494px;--c:#969696;--b:#1e1e1e"></i>
<i class="z k" style="left:722px;top:494px;--c:#969696;--b:#1e1e1e"></i>
<i class="z k" style="left:762px;top:494px;--c:#969696;--b:#1e1e1e"></i>
<i class="z k" style="left:2022px;top:494px;--c:#969696;--b:#1e1e1e"></i>
<i class="z k" style="left:2062px;top:494px;--c:#969696;--b:#1e1e1e"></i>
<i class="z k" style="left:882px;top:494px;--c:#969696;--b:#1e1e1e"></i>
<i class="z k" style="left:922px;top:494px;--c:#969696;--b:#1e1e1e"></i>
<i class="z k" style="left:2182px;top:494px;--c:#969696;--b:#1e1e1e"></i>
<i class="z k" style="left:2222px;top:494px;--c:#969696;--b:#1e1e1e"></i>
<i class="z k" style="left:1042px;top:494px;--c:#969696;--b:#1e1e1e"></i>
<i class="z k" style="left:1082px;top:494px;--c:#969696;--b:#1e1e1e"></i>
<i class="z k" style="left:2342px;top:494px;--c:#969696;--b:#1e1e1e"></i>
<i class="z k" style="left:2382px;top:494px;--c:#969696;--b:#1e1e1e"></i>
<i class="z k" style="left:1202px;top:494px;--c:#969696;--b:#1e1e1e"></i>
<i class="z k" style="left:1242px;top:494px;--c:#969696;--b:#1e1e1e"></i>
<i class="z k" style="left:2502px;top:494px;--c:#969696;--b:#1e1e1e"></i>
<i class="z k" style="left:2542px;top:494px;--c:#969696;--b:#1e1e1e"></i>
<i class="z k" style="left:1362px;top:494px;--c:#969696;--b:#1e1e1e"></i>
<i class="z k" style="left:1402px;top:494px;--c:#969696;--b:#1e1e1e"></i>
<i class="z k" style="left:2662px;top:494px;--c:#969696;--b:#1e1e1e"></i>
<i class="z k" style="left:2702px;top:494px;--c:#969696;--b:#1e1e1e"></i>
<i class="z" style="left:202px;top:534px;--c:#66bdcf;--b:#1e1e1e"></i>
<i class="z k" style="left:242px;top:534px;--c:#969696;--b:#1e1e1e"></i>
<i class="z k" style="left:282px;top:534px;--c:#969696;--b:#1e1e1e"></i>
<i class="z" style="left:1482px;top:534px;--c:#66bdcf;--b:#1e1e1e"></i>
<i class="z k" style="left:1542px;top:534px;--c:#969696;--b:#1e1e1e"></i>
<i class="z k" style="left:1582px;top:534px;--c:#969696;--b:#1e1e1e"></i>
<i class="z k" style="left:402px;top:534px;--c:#969696;--b:#1e1e1e"></i>
<i class="z k" style="left:442px;top:534px;--c:#969696;--b:#1e1e1e"></i>
<i class="z k" style="left:1702px;top:534px;--c:#969696;--b:#1e1e1e"></i>
<i class="z k" style="left:1742px;top:534px;--c:#969696;--b:#1e1e1e"></i>
<i class="z k" style="left:562px;top:534px;--c:#969696;--b:#1e1e1e"></i>
<i class="z k" style="left:602px;top:534px;--c:#969696;--b:#1e1e1e"></i>
<i class="z" style="left:1822px;top:534px;--c:#66bdcf;--b:#1e1e1e"></i>
<i class="z k" style="left:1862px;top:534px;--c:#969696;--b:#1e1e1e"></i>
<i class="z k" style="left:1902px;top:534px;--c:#969696;--b:#1e1e1e"></i>
<i class="z k" style="left:722px;top:534px;--c:#969696;--b:#1e1e1e"></i>
<i class="z k" style="left:762px;top:534px;--c:#969696;--b:#1e1e1e"></i>
<i class="z k" style="left:2022px;top:534px;--c:#969696;--b:#1e1e1e"></i>
<i class="z k" style="left:2062px;top:534px;--c:#969696;--b:#1e1e1e"></i>
<i class="z k" style="left:882px;top:534px;--c:#969696;--b:#1e1e1e"></i>
<i class="z k" style="left:922px;top:534px;--c:#969696;--b:#1e1e1e"></i>
<i class="z k" style="left:2182px;top:534px;--c:#969696;--b:#1e1e1e"></i>
<i class="z k" style="left:2222px;top:534px;--c:#969696;--b:#1e1e1e"></i>
<i class="z" style="left:1002px;top:534px;--c:#66bdcf;--b:#1e1e1e"></i>
<i class="z k" style="left:1042px;top:534px;--c:#969696;--b:#1e1e1e"></i>
<i class="z k" style="left:1082px;top:534px;--c:#969696;--b:#1e1e1e"></i>
<i class="z k" style="left:2342px;top:534px;--c:#969696;--b:#1e1e1e"></i>
<i class="z k" style="left:2382px;top:534px;--c:#969696;--b:#1e1e1e"></i>
<i class="z k" style="left:1202px;top:534px;--c:#969696;--b:#1e1e1e"></i>
<i class="z k" style="left:1242px;top:534px;--c:#969696;--b:#1e1e1e"></i>
<i class="z k" style="left:2502px;top:534px;--c:#969696;--b:#1e1e1e"></i>
<i class="z k" style="left:2542px;top:534px;--c:#969696;--b:#1e1e1e"></i>
<i class="z k" style="left:1362px;top:534px;--c:#969696;--b:#1e1e1e"></i>
<i class="z k" style="left:1402px;top:534px;--c:#969696;--b:#1e1e1e"></i>
<i class="z" style="left:2622px;top:534px;--c:#66bdcf;--b:#1e1e1e"></i>
<i class="z k" style="left:2662px;top:534px;--c:#969696;--b:#1e1e1e"></i>
<i class="z k" style="left:2702px;top:534px;--c:#969696;--b:#1e1e1e"></i>
<i class="z k" style="left:242px;top:574px;--c:#969696;--b:#1e1e1e"></i>
<i class="z k" style="left:282px;top:574px;--c:#969696;--b:#1e1e1e"></i>
<i class="z" style="left:1482px;top:574px;--c:#66bdcf;--b:#1e1e1e"></i>
<i class="z k" style="left:1542px;top:574px;--c:#969696;--b:#1e1e1e"></i>
<i class="z k" style="left:1582px;top:574px;--c:#969696;--b:#1e1e1e"></i>
<i class="z k" style="left:402px;top:574px;--c:#969696;--b:#1e1e1e"></i>
<i class="z k" style="left:442px;top:574px;--c:#969696;--b:#1e1e1e"></i>
<i class="z k" style="left:1702px;top:574px;--c:#969696;--b:#1e1e1e"></i>
<i class="z k" style="left:1742px;top:574px;--c:#969696;--b:#1e1e1e"></i>
<i class="z" style="left:562px;top:574px;--c:#d75636;--b:#1e1e1e"></i>
<i class="z k" style="left:1862px;top:574px;--c:#969696;--b:#1e1e1e"></i>
<i class="z k" style="left:1902px;top:574px;--c:#969696;--b:#1e1e1e"></i>
<i class="z k" style="left:722px;top:574px;--c:#969696;--b:#1e1e1e"></i>
<i class="z k" style="left:762px;top:574px;--c:#969696;--b:#1e1e1e"></i>
<i class="z k" style="left:2022px;top:574px;--c:#969696;--b:#1e1e1e"></i>
<i class="z k" style="left:2062px;top:574px;--c:#969696;--b:#1e1e1e"></i>
<i class="z k" style="left:882px;top:574px;--c:#969696;--b:#1e1e1e"></i>
<i class="z k" style="left:922px;top:574px;--c:#969696;--b:#1e1e1e"></i>
<i class="z k" style="left:2182px;top:574px;--c:#969696;--b:#1e1e1e"></i>
<i class="z k" style="left:2222px;top:574px;--c:#969696;--b:#1e1e1e"></i>
<i class="z k" style="left:1042px;top:574px;--c:#969696;--b:#1e1e1e"></i>
<i class="z k" style="left:1082px;top:574px;--c:#969696;--b:#1e1e1e"></i>
<i class="z k" style="left:2342px;top:574px;--c:#969696;--b:#1e1e1e"></i>
<i class="z k" style="left:2382px;top:574px;--c:#969696;--b:#1e1e1e"></i>
<i class="z k" style="left:1202px;top:574px;--c:#969696;--b:#1e1e1e"></i>
<i class="z k" style="left:1242px;top:574px;--c:#969696;--b:#1e1e1e"></i>
<i class="z k" style="left:2502px;top:574px;--c:#969696;--b:#1e1e1e"></i>
<i class="z k" style="left:2542px;top:574px;--c:#969696;--b:#1e1e1e"></i>
<i class="z k" style="left:1362px;top:574px;--c:#969696;--b:#1e1e1e"></i>
<i class="z k" style="left:1402px;top:574px;--c:#969696;--b:#1e1e1e"></i>
<i class="z k" style="left:2662px;top:574px;--c:#969696;--b:#1e1e1e"></i>
<i class="z k" style="left:2702px;top:574px;--c:#969696;--b:#1e1e1e"></i>
<i class="z" style="left:242px;top:614px;--c:#d75636;--b:#1e1e1e"></i>
<i class="z" style="left:1482px;top:614px;--c:#66bdcf;--b:#1e1e1e"></i>
<i class="z" style="left:1542px;top:614px;--c:#d75636;--b:#1e1e1e"></i>
<i class="z k" style="left:402px;top:614px;--c:#969696;--b:#1e1e1e"></i>
<i class="z k" style="left:442px;top:614px;--c:#969696;--b:#1e1e1e"></i>
<i class="z" style="left:1662px;top:614px;--c:#66bdcf;--b:#1e1e1e"></i>
<i class="z k" style="left:1702px;top:614px;--c:#969696;--b:#1e1e1e"></i>
<i class="z k" style="left:1742px;top:614px;--c:#969696;--b:#1e1e1e"></i>
<i class="z k" style="left:562px;top:614px;--c:#969696;--b:#1e1e1e"></i>
<i class="z k" style="left:602px;top:614px;--c:#969696;--b:#1e1e1e"></i>
<i class="z k" style="left:1862px;top:614px;--c:#969696;--b:#1e1e1e"></i>
<i class="z k" style="left:1902px;top:614px;--c:#969696;--b:#1e1e1e"></i>
<i class="z k" style="left:722px;top:614px;--c:#969696;--b:#1e1e1e"></i>
<i class="z k" style="left:762px;top:614px;--c:#969696;--b:#1e1e1e"></i>
<i class="z k" style="left:2022px;top:614px;--c:#969696;--b:#1e1e1e"></i>
<i class="z k" style="left:2062px;top:614px;--c:#969696;--b:#1e1e1e"></i>
<i class="z" style="left:842px;top:614px;--c:#66bdcf;--b:#1e1e1e"></i>
<i class="z k" style="left:882px;top:614px;--c:#969696;--b:#1e1e1e"></i>
<i class="z k" style="left:922px;top:614px;--c:#969696;--b:#1e1e1e"></i>
<i class="z k" style="left:2182px;top:614px;--c:#969696;--b:#1e1e1e"></i>
<i class="z k" style="left:2222px;top:614px;--c:#969696;--b:#1e1e1e"></i>
<i class="z k" style="left:1042px;top:614px;--c:#969696;--b:#1e1e1e"></i>
<i class="z k" style="left:1082px;top:614px;--c:#969696;--b:#1e1e1e"></i>
<i class="z k" style="left:2342px;top:614px;--c:#969696;--b:#1e1e1e"></i>
<i class="z k" style="left:2382px;top:614px;--c:#969696;--b:#1e1e1e"></i>
<i class="z k" style="left:1202px;top:614px;--c:#969696;--b:#1e1e1e"></i>
<i class="z k" style="left:1242px;top:614px;--c:#969696;--b:#1e1e1e"></i>
<i class="z" style="left:2462px;top:614px;--c:#66bdcf;--b:#1e1e1e"></i>
<i class="z k" style="left:2502px;top:614px;--c:#969696;--b:#1e1e1e"></i>
<i class="z k" style="left:2542px;top:614px;--c:#969696;--b:#1e1e1e"></i>
<i class="z k" style="left:1362px;top:614px;--c:#969696;--b:#1e1e1e"></i>
<i class="z k" style="left:1402px;top:614px;--c:#969696;--b:#1e1e1e"></i>
<i class="z k" style="left:2662px;top:614px;--c:#969696;--b:#1e1e1e"></i>
<i class="z k" style="left:2702px;top:614px;--c:#969696;--b:#1e1e1e"></i>
<i class="z k" style="left:1342px;top:654px;--c:#969696;--b:#1e1e1e"></i>
<i class="z k" style="left:1722px;top:654px;--c:#66c246;--b:#1e1e1e"></i>
<i class="z k" style="left:1882px;top:654px;--c:#969696;--b:#1e1e1e"></i>
<i class="z k" style="left:1922px;top:654px;--c:#969696;--b:#1e1e1e"></i>
<i class="z k" style="left:1262px;top:734px;--c:#969696;--b:#1e1e1e"></i>
<i class="z k" style="left:1362px;top:734px;--c:#969696;--b:#1e1e1e"></i>
<i class="z k" style="left:1382px;top:734px;--c:#969696;--b:#1e1e1e"></i>
<i class="z k" style="left:1622px;top:734px;--c:#66bdcf;--b:#1e1e1e"></i>
<i class="z k" style="left:1642px;top:734px;--c:#66bdcf;--b:#1e1e1e"></i>
<i class="z k" style="left:1742px;top:734px;--c:#66bdcf;--b:#1e1e1e"></i>
<i class="z" style="left:542px;top:854px;--c:#000000;--b:#4ba4b4"></i>
<i class="z" style="left:622px;top:854px;--c:#000000;--b:#4ba4b4"></i>
<i class="z" style="left:802px;top:854px;--c:#000000;--b:#4ba4b4"></i>
<i class="z" style="left:942px;top:854px;--c:#000000;--b:#4ba4b4"></i>
<i class="z" style="left:2402px;top:854px;--c:#000000;--b:#4ba4b4"></i>
<i class="z" style="left:2422px;top:854px;--c:#000000;--b:#4ba4b4"></i>
<i class="z" style="left:542px;top:894px;--c:#ffffff;--b:#1e1e1e"></i>
<i class="z k" style="left:622px;top:894px;--c:#969696;--b:#1e1e1e"></i>
<i class="z" style="left:802px;top:894px;--c:#66bdcf;--b:#1e1e1e"></i>
<i class="z" style="left:942px;top:894px;--c:#66bdcf;--b:#1e1e1e"></i>
<i class="z" style="left:1102px;top:894px;--c:#66bdcf;--b:#1e1e1e"></i>
<i class="z" style="left:1122px;top:894px;--c:#66bdcf;--b:#1e1e1e"></i>
<i class="z" style="left:1162px;top:894px;--c:#66bdcf;--b:#1e1e1e"></i>
<i class="z" style="left:1362px;top:894px;--c:#ffffff;--b:#1e1e1e"></i>
<i class="z" style="left:2402px;top:894px;--c:#66c246;--b:#1e1e1e"></i>
<i class="z" style="left:2422px;top:894px;--c:#66c246;--b:#1e1e1e"></i>
<i class="z" style="left:242px;top:934px;--c:#ffffff;--b:#1e1e1e"></i>
<i class="z" style="left:542px;top:934px;--c:#ffffff;--b:#1e1e1e"></i>
<i class="z k" style="left:622px;top:934px;--c:#969696;--b:#1e1e1e"></i>
<i class="z" style="left:802px;top:934px;--c:#66bdcf;--b:#1e1e1e"></i>
<i class="z" style="left:942px;top:934px;--c:#66bdcf;--b:#1e1e1e"></i>
<i class="z" style="left:1102px;top:934px;--c:#66bdcf;--b:#1e1e1e"></i>
<i class="z" style="left:1122px;top:934px;--c:#66bdcf;--b:#1e1e1e"></i>
<i class="z" style="left:1162px;top:934px;--c:#66bdcf;--b:#1e1e1e"></i>
<i class="z" style="left:1422px;top:934px;--c:#ffffff;--b:#1e1e1e"></i>
<i class="z" style="left:2402px;top:934px;--c:#66c246;--b:#1e1e1e"></i>
<i class="z" style="left:2422px;top:934px;--c:#66c246;--b:#1e1e1e"></i>
<i class="z" style="left:542px;top:974px;--c:#ffffff;--b:#1e1e1e"></i>
<i class="z k" style="left:622px;top:974px;--c:#969696;--b:#1e1e1e"></i>
<i class="z" style="left:802px;top:974px;--c:#66bdcf;--b:#1e1e1e"></i>
<i class="z" style="left:942px;top:974px;--c:#66bdcf;--b:#1e1e1e"></i>
<i class="z" style="left:1102px;top:974px;--c:#66bdcf;--b:#1e1e1e"></i>
<i class="z" style="left:1122px;top:974px;--c:#66bdcf;--b:#1e1e1e"></i>
<i class="z" style="left:1162px;top:974px;--c:#66bdcf;--b:#1e1e1e"></i>
<i class="z" style="left:2402px;top:974px;--c:#66c246;--b:#1e1e1e"></i>
<i class="z" style="left:2422px;top:974px;--c:#66c246;--b:#1e1e1e"></i>
<i class="z" style="left:222px;top:1014px;--c:#ffffff;--b:#1e1e1e"></i>
<i class="z" style="left:542px;top:1014px;--c:#ffffff;--b:#1e1e1e"></i>
<i class="z k" style="left:622px;top:1014px;--c:#969696;--b:#1e1e1e"></i>
<i class="z" style="left:802px;top:1014px;--c:#66bdcf;--b:#1e1e1e"></i>
<i class="z" style="left:942px;top:1014px;--c:#66bdcf;--b:#1e1e1e"></i>
<i class="z" style="left:1102px;top:1014px;--c:#66bdcf;--b:#1e1e1e"></i>
<i class="z" style="left:1122px;top:1014px;--c:#66bdcf;--b:#1e1e1e"></i>
<i class="z" style="left:1162px;top:1014px;--c:#66bdcf;--b:#1e1e1e"></i>
<i class="z" style="left:2402px;top:1014px;--c:#66c246;--b:#1e1e1e"></i>
<i class="z" style="left:2422px;top:1014px;--c:#66c246;--b:#1e1e1e"></i>
<i class="z" style="left:222px;top:1054px;--c:#ffffff;--b:#1e1e1e"></i>
<i class="z" style="left:542px;top:1054px;--c:#ffffff;--b:#1e1e1e"></i>
<i class="z k" style="left:622px;top:1054px;--c:#969696;--b:#1e1e1e"></i>
<i class="z" style="left:802px;top:1054px;--c:#66bdcf;--b:#1e1e1e"></i>
<i class="z" style="left:942px;top:1054px;--c:#66bdcf;--b:#1e1e1e"></i>
<i class="z" style="left:1102px;top:1054px;--c:#66bdcf;--b:#1e1e1e"></i>
<i class="z" style="left:1122px;top:1054px;--c:#66bdcf;--b:#1e1e1e"></i>
<i class="z" style="left:1162px;top:1054px;--c:#66bdcf;--b:#1e1e1e"></i>
<i class="z" style="left:2402px;top:1054px;--c:#66c246;--b:#1e1e1e"></i>
<i class="z" style="left:2422px;top:1054px;--c:#66c246;--b:#1e1e1e"></i>
<i class="z" style="left:542px;top:1094px;--c:#ffffff;--b:#1e1e1e"></i>
<i class="z k" style="left:622px;top:1094px;--c:#969696;--b:#1e1e1e"></i>
<i class="z" style="left:802px;top:1094px;--c:#66bdcf;--b:#1e1e1e"></i>
<i class="z" style="left:942px;top:1094px;--c:#66bdcf;--b:#1e1e1e"></i>
<i class="z" style="left:2402px;top:1094px;--c:#66c246;--b:#1e1e1e"></i>
<i class="z" style="left:2422px;top:1094px;--c:#66c246;--b:#1e1e1e"></i>
<i class="z" style="left:542px;top:1134px;--c:#ffffff;--b:#1e1e1e"></i>
<i class="z k" style="left:622px;top:1134px;--c:#969696;--b:#1e1e1e"></i>
<i class="z" style="left:802px;top:1134px;--c:#66bdcf;--b:#1e1e1e"></i>
<i class="z" style="left:942px;top:1134px;--c:#66bdcf;--b:#1e1e1e"></i>
<i class="z" style="left:2402px;top:1134px;--c:#66c246;--b:#1e1e1e"></i>
<i class="z" style="left:2422px;top:1134px;--c:#66c246;--b:#1e1e1e"></i>
<i class="z" style="left:542px;top:1174px;--c:#ffffff;--b:#1e1e1e"></i>
<i class="z k" style="left:622px;top:1174px;--c:#969696;--b:#1e1e1e"></i>
<i class="z" style="left:802px;top:1174px;--c:#66bdcf;--b:#1e1e1e"></i>
<i class="z" style="left:942px;top:1174px;--c:#66bdcf;--b:#1e1e1e"></i>
<i class="z" style="left:2402px;top:1174px;--c:#66c246;--b:#1e1e1e"></i>
<i class="z" style="left:2422px;top:1174px;--c:#66c246;--b:#1e1e1e"></i>
<i class="z" style="left:542px;top:1214px;--c:#ffffff;--b:#1e1e1e"></i>
<i class="z k" style="left:622px;top:1214px;--c:#969696;--b:#1e1e1e"></i>
<i class="z" style="left:802px;top:1214px;--c:#66bdcf;--b:#1e1e1e"></i>
<i class="z" style="left:942px;top:1214px;--c:#66bdcf;--b:#1e1e1e"></i>
<i class="z" style="left:1362px;top:1214px;--c:#ffffff;--b:#1e1e1e"></i>
<i class="z" style="left:1442px;top:1214px;--c:#ffffff;--b:#1e1e1e"></i>
<i class="z" style="left:2402px;top:1214px;--c:#66c246;--b:#1e1e1e"></i>
<i class="z" style="left:2422px;top:1214px;--c:#66c246;--b:#1e1e1e"></i>
<i class="z" style="left:542px;top:1254px;--c:#ffffff;--b:#1e1e1e"></i>
<i class="z k" style="left:622px;top:1254px;--c:#969696;--b:#1e1e1e"></i>
<i class="z" style="left:802px;top:1254px;--c:#66bdcf;--b:#1e1e1e"></i>
<i class="z" style="left:942px;top:1254px;--c:#66bdcf;--b:#1e1e1e"></i>
<i class="z" style="left:1362px;top:1254px;--c:#ffffff;--b:#1e1e1e"></i>
<i class="z" style="left:2402px;top:1254px;--c:#66c246;--b:#1e1e1e"></i>
<i class="z" style="left:2422px;top:1254px;--c:#66c246;--b:#1e1e1e"></i>
<i class="z" style="left:542px;top:1294px;--c:#ffffff;--b:#1e1e1e"></i>
<i class="z k" style="left:622px;top:1294px;--c:#969696;--b:#1e1e1e"></i>
<i class="z" style="left:802px;top:1294px;--c:#66bdcf;--b:#1e1e1e"></i>
<i class="z" style="left:942px;top:1294px;--c:#66bdcf;--b:#1e1e1e"></i>
<i class="z" style="left:2402px;top:1294px;--c:#66c246;--b:#1e1e1e"></i>
<i class="z" style="left:2422px;top:1294px;--c:#66c246;--b:#1e1e1e"></i>
<i class="z" style="left:222px;top:1334px;--c:#ffffff;--b:#1e1e1e"></i>
<i class="z" style="left:542px;top:1334px;--c:#ffffff;--b:#1e1e1e"></i>
<i class="z k" style="left:622px;top:1334px;--c:#969696;--b:#1e1e1e"></i>
<i class="z" style="left:802px;top:1334px;--c:#66bdcf;--b:#1e1e1e"></i>
<i class="z" style="left:942px;top:1334px;--c:#66bdcf;--b:#1e1e1e"></i>
<i class="z" style="left:1422px;top:1334px;--c:#ffffff;--b:#1e1e1e"></i>
<i class="z" style="left:2402px;top:1334px;--c:#66c246;--b:#1e1e1e"></i>
<i class="z" style="left:2422px;top:1334px;--c:#66c246;--b:#1e1e1e"></i>
<i class="z" style="left:222px;top:1374px;--c:#ffffff;--b:#1e1e1e"></i>
<i class="z" style="left:542px;top:1374px;--c:#ffffff;--b:#1e1e1e"></i>
<i class="z k" style="left:622px;top:1374px;--c:#969696;--b:#1e1e1e"></i>
<i class="z" style="left:802px;top:1374px;--c:#66bdcf;--b:#1e1e1e"></i>
<i class="z" style="left:942px;top:1374px;--c:#66bdcf;--b:#1e1e1e"></i>
<i class="z" style="left:2402px;top:1374px;--c:#66c246;--b:#1e1e1e"></i>
<i class="z" style="left:2422px;top:1374px;--c:#66c246;--b:#1e1e1e"></i>
<i class="z" style="left:222px;top:1414px;--c:#ffffff;--b:#1e1e1e"></i>
<i class="z" style="left:542px;top:1414px;--c:#ffffff;--b:#1e1e1e"></i>
<i class="z k" style="left:622px;top:1414px;--c:#969696;--b:#1e1e1e"></i>
<i class="z" style="left:802px;top:1414px;--c:#66bdcf;--b:#1e1e1e"></i>
<i class="z" style="left:942px;top:1414px;--c:#66bdcf;--b:#1e1e1e"></i>
<i class="z" style="left:1422px;top:1414px;--c:#ffffff;--b:#1e1e1e"></i>
<i class="z" style="left:2402px;top:1414px;--c:#66c246;--b:#1e1e1e"></i>
<i class="z" style="left:2422px;top:1414px;--c:#66c246;--b:#1e1e1e"></i>
<i class="z" style="left:222px;top:1454px;--c:#ffffff;--b:#1e1e1e"></i>
<i class="z" style="left:542px;top:1454px;--c:#ffffff;--b:#1e1e1e"></i>
<i class="z k" style="left:622px;top:1454px;--c:#969696;--b:#1e1e1e"></i>
<i class="z" style="left:802px;top:1454px;--c:#66bdcf;--b:#1e1e1e"></i>
<i class="z" style="left:942px;top:1454px;--c:#66bdcf;--b:#1e1e1e"></i>
<i class="z" style="left:1382px;top:1454px;--c:#ffffff;--b:#1e1e1e"></i>
<i class="z" style="left:2402px;top:1454px;--c:#66c246;--b:#1e1e1e"></i>
<i class="z" style="left:2422px;top:1454px;--c:#66c246;--b:#1e1e1e"></i>
<i class="z" style="left:222px;top:1494px;--c:#ffffff;--b:#1e1e1e"></i>
<i class="z" style="left:542px;top:1494px;--c:#ffffff;--b:#1e1e1e"></i>
<i class="z k" style="left:622px;top:1494px;--c:#969696;--b:#1e1e1e"></i>
<i class="z" style="left:802px;top:1494px;--c:#66bdcf;--b:#1e1e1e"></i>
<i class="z" style="left:942px;top:1494px;--c:#66bdcf;--b:#1e1e1e"></i>
<i class="z" style="left:2402px;top:1494px;--c:#66c246;--b:#1e1e1e"></i>
<i class="z" style="left:2422px;top:1494px;--c:#66c246;--b:#1e1e1e"></i>
<i class="z" style="left:542px;top:1534px;--c:#ffffff;--b:#1e1e1e"></i>
<i class="z k" style="left:622px;top:1534px;--c:#969696;--b:#1e1e1e"></i>
<i class="z" style="left:802px;top:1534px;--c:#66bdcf;--b:#1e1e1e"></i>
<i class="z" style="left:942px;top:1534px;--c:#66bdcf;--b:#1e1e1e"></i>
<i class="z" style="left:1382px;top:1534px;--c:#ffffff;--b:#1e1e1e"></i>
<i class="z" style="left:2402px;top:1534px;--c:#66c246;--b:#1e1e1e"></i>
<i class="z" style="left:2422px;top:1534px;--c:#66c246;--b:#1e1e1e"></i>
<i class="z" style="left:1602px;top:1574px;--c:#ffffff;--b:#1e1e1e"></i><div style="position:absolute;left:112px;top:76px;width:2680px;height:1548px;border-radius:20px;box-shadow:inset 0 0 0 1.5px #626262"></div><svg style="position:absolute;left:1182px;top:827px" width="20" height="22" viewBox="0 0 20 22"><path d="M2 2.2H18L10 17.6Z" fill="none" stroke="#000" stroke-width="2.8" stroke-linejoin="miter"/></svg></body></html>
